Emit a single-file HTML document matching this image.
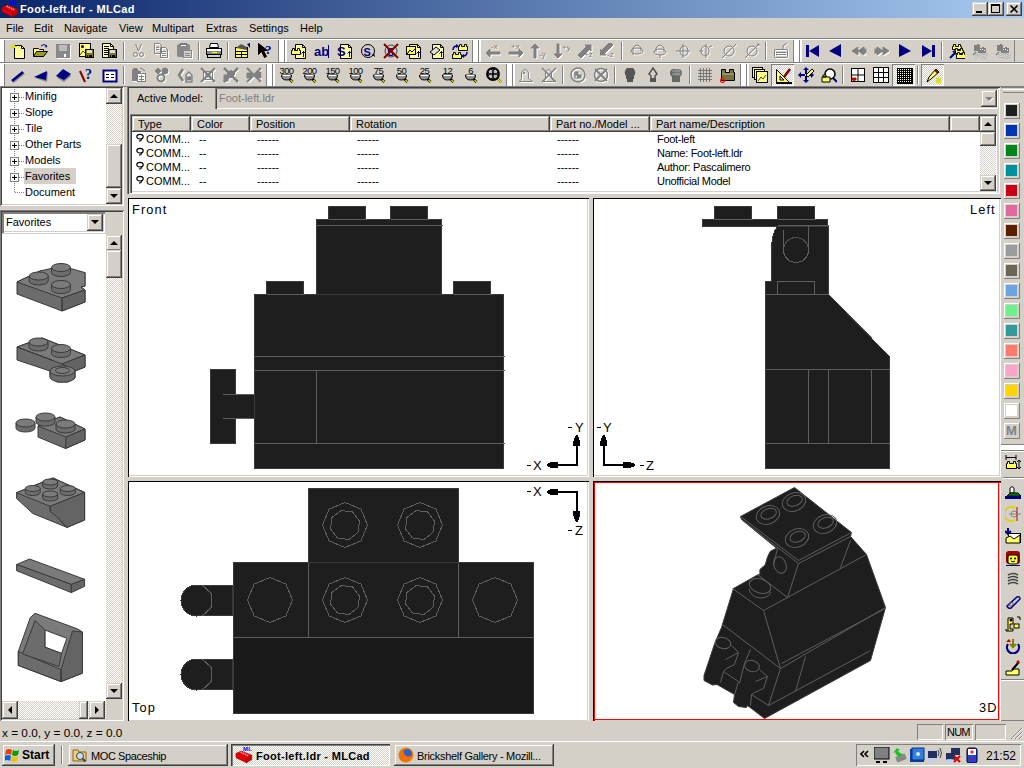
<!DOCTYPE html>
<html><head><meta charset="utf-8"><style>
html,body{margin:0;padding:0;width:1024px;height:768px;overflow:hidden;background:#D4D0C8;font-family:'Liberation Sans', sans-serif}
</style></head><body>
<div style="position:absolute;left:0px;top:0px;width:1024px;height:18px;background:linear-gradient(90deg,#0A246A,#A6CAF0)"></div><div style="position:absolute;left:20px;top:2px;white-space:nowrap;font:bold 11px 'Liberation Sans', sans-serif;color:#fff;line-height:14px;letter-spacing:0.35px">Foot-left.ldr - MLCad</div><div style="position:absolute;left:972px;top:2px;width:16px;height:14px;background:#D4D0C8;box-shadow:inset -1px -1px #404040, inset 1px 1px #D4D0C8, inset -2px -2px #808080, inset 2px 2px #fff;"></div><div style="position:absolute;left:988px;top:2px;width:16px;height:14px;background:#D4D0C8;box-shadow:inset -1px -1px #404040, inset 1px 1px #D4D0C8, inset -2px -2px #808080, inset 2px 2px #fff;"></div><div style="position:absolute;left:1006px;top:2px;width:16px;height:14px;background:#D4D0C8;box-shadow:inset -1px -1px #404040, inset 1px 1px #D4D0C8, inset -2px -2px #808080, inset 2px 2px #fff;"></div><div style="position:absolute;left:976px;top:11px;width:6px;height:2px;background:#000"></div><div style="position:absolute;left:991px;top:4px;width:9px;height:9px;box-shadow:inset 0 2px #000, inset 1px 0 #000, inset -1px 0 #000, inset 0 -1px #000"></div><svg style="position:absolute;left:1006px;top:2px" width="16" height="14"><path d="M4.5 3.5 L11.5 10.5 M11.5 3.5 L4.5 10.5" stroke="#000" stroke-width="1.6"/></svg><div style="position:absolute;left:0px;top:18px;width:1024px;height:20px;background:#D4D0C8"></div><div style="position:absolute;left:6px;top:22px;white-space:nowrap;font:11px 'Liberation Sans', sans-serif;color:#000;line-height:13px">File</div><div style="position:absolute;left:34px;top:22px;white-space:nowrap;font:11px 'Liberation Sans', sans-serif;color:#000;line-height:13px">Edit</div><div style="position:absolute;left:64px;top:22px;white-space:nowrap;font:11px 'Liberation Sans', sans-serif;color:#000;line-height:13px">Navigate</div><div style="position:absolute;left:119px;top:22px;white-space:nowrap;font:11px 'Liberation Sans', sans-serif;color:#000;line-height:13px">View</div><div style="position:absolute;left:152px;top:22px;white-space:nowrap;font:11px 'Liberation Sans', sans-serif;color:#000;line-height:13px">Multipart</div><div style="position:absolute;left:206px;top:22px;white-space:nowrap;font:11px 'Liberation Sans', sans-serif;color:#000;line-height:13px">Extras</div><div style="position:absolute;left:249px;top:22px;white-space:nowrap;font:11px 'Liberation Sans', sans-serif;color:#000;line-height:13px">Settings</div><div style="position:absolute;left:300px;top:22px;white-space:nowrap;font:11px 'Liberation Sans', sans-serif;color:#000;line-height:13px">Help</div><div style="position:absolute;left:0px;top:38px;width:1024px;height:1px;background:#808080"></div><div style="position:absolute;left:0px;top:39px;width:1024px;height:1px;background:#fff"></div><div style="position:absolute;left:0px;top:40px;width:1024px;height:22px;background:#D4D0C8"></div><div style="position:absolute;left:0px;top:62px;width:1024px;height:1px;background:#808080"></div><div style="position:absolute;left:0px;top:63px;width:1024px;height:1px;background:#fff"></div><div style="position:absolute;left:0px;top:64px;width:1024px;height:22px;background:#D4D0C8"></div><div style="position:absolute;left:0px;top:86px;width:1024px;height:1px;background:#808080"></div><div style="position:absolute;left:0px;top:40px;width:4px;height:22px;background:#fff"></div><div style="position:absolute;left:4px;top:40px;width:1px;height:22px;background:#808080"></div><div style="position:absolute;left:0px;top:64px;width:4px;height:22px;background:#fff"></div><div style="position:absolute;left:4px;top:64px;width:1px;height:22px;background:#808080"></div><svg style="position:absolute;left:10px;top:43px" width="16" height="16"><path d="M4.5,2.5 h7 l3,3 v10 h-10 z" fill="#FFFFA0" stroke="#000"/><path d="M11.5,2.5 v3 h3" fill="none" stroke="#000"/><path d="M1,1 l5,5 M6,1 l-5,5 M3.5,0 v7 M0,3.5 h7" stroke="#E0E000"/></svg><svg style="position:absolute;left:33px;top:43px" width="16" height="16"><path d="M0.5,5.5 h5 l1,1 h4 v7 h-10 z" fill="#FFFF60" stroke="#000"/><path d="M3.5,8.5 h11 l-4,5 h-10 z" fill="#9a9a30" stroke="#000"/><path d="M8,3 q3,-3 6,0" stroke="#000080" fill="none"/><path d="M13,2 l1.5,2 l-2.5,0.5z" fill="#000080"/></svg><svg style="position:absolute;left:56px;top:43px" width="16" height="16"><rect x="0" y="1" width="14" height="14" fill="#888"/><rect x="1" y="15" width="14" height="1" fill="#fff"/><rect x="14" y="2" width="1" height="14" fill="#fff"/><rect x="3" y="2" width="8" height="6" fill="#bbb"/><rect x="8" y="11" width="2" height="3" fill="#fff"/></svg><svg style="position:absolute;left:79px;top:43px" width="16" height="16"><rect x="0.5" y="0.5" width="11" height="13" fill="#FFFF80" stroke="#000"/><circle cx="3.5" cy="3.5" r="1.5" fill="#000"/><path d="M1,12 l3,-4 l3,3" stroke="#444" fill="none"/><rect x="6" y="6" width="9" height="9" fill="#000"/><rect x="7" y="7" width="7" height="7" fill="#808000"/><rect x="8" y="7" width="5" height="3" fill="#ddd"/><rect x="8" y="12" width="5" height="2" fill="#000"/><rect x="9" y="12" width="1" height="2" fill="#808000"/></svg><svg style="position:absolute;left:102px;top:43px" width="16" height="16"><path d="M0.5,0.5 h8 l3,3 v11 h-11 z" fill="#FFFFA0" stroke="#000"/><path d="M8.5,0.5 v3 h3" fill="none" stroke="#000"/><path d="M2,3.5 h5 M2,5.5 h5 M2,7.5 h4 M2,9.5 h4 M2,11.5 h4" stroke="#000"/><rect x="6" y="6" width="9" height="9" fill="#000"/><rect x="7" y="7" width="7" height="7" fill="#808000"/><rect x="8" y="7" width="5" height="3" fill="#ddd"/><rect x="8" y="12" width="5" height="2" fill="#000"/><rect x="9" y="12" width="1" height="2" fill="#808000"/></svg><div style="position:absolute;left:123px;top:42px;width:1px;height:18px;background:#808080"></div><div style="position:absolute;left:124px;top:42px;width:1px;height:18px;background:#fff"></div><svg style="position:absolute;left:131px;top:43px" width="16" height="16"><g transform="translate(1,1)" fill="#fff" stroke="#fff"><path d="M4.5,1 l3,7 M10.5,1 l-3,7" fill="none"/><circle cx="4.5" cy="11.5" r="2" fill="none"/><circle cx="10.5" cy="11.5" r="2" fill="none"/></g><g fill="#808080" stroke="#808080"><path d="M4.5,1 l3,7 M10.5,1 l-3,7" fill="none"/><circle cx="4.5" cy="11.5" r="2" fill="none"/><circle cx="10.5" cy="11.5" r="2" fill="none"/></g></svg><svg style="position:absolute;left:154px;top:43px" width="16" height="16"><g transform="translate(1,1)" fill="#fff" stroke="#fff"><path d="M0.5,0.5 h5 l2,2 v8 h-7 z M6.5,4.5 h5 l2,2 v8 h-7 z" fill="none"/><path d="M2,4.5 h3 M2,6.5 h3 M8,8.5 h4 M8,10.5 h4 M8,12.5 h4" fill="none"/></g><g fill="#808080" stroke="#808080"><path d="M0.5,0.5 h5 l2,2 v8 h-7 z M6.5,4.5 h5 l2,2 v8 h-7 z" fill="none"/><path d="M2,4.5 h3 M2,6.5 h3 M8,8.5 h4 M8,10.5 h4 M8,12.5 h4" fill="none"/></g></svg><svg style="position:absolute;left:177px;top:43px" width="16" height="16"><g transform="translate(1,1)"><rect x="6" y="7" width="9" height="8" fill="#fff"/></g><rect x="0" y="1" width="13" height="13" rx="2" fill="#888"/><rect x="3" y="0" width="7" height="3" fill="#777"/><rect x="4" y="2" width="5" height="1" fill="#fff"/><rect x="6.5" y="7.5" width="8" height="7" fill="#D4D0C8" stroke="#888"/><path d="M8,10.5 h5 M8,12.5 h5" stroke="#888"/></svg><div style="position:absolute;left:198px;top:42px;width:1px;height:18px;background:#808080"></div><div style="position:absolute;left:199px;top:42px;width:1px;height:18px;background:#fff"></div><svg style="position:absolute;left:206px;top:43px" width="16" height="16"><path d="M4.5,0.5 h7 l1,4 h-9 z" fill="#fff" stroke="#000"/><rect x="0.5" y="5.5" width="15" height="6" fill="#fff" stroke="#000"/><rect x="1" y="8" width="14" height="3" fill="#888"/><rect x="6" y="9" width="5" height="1" fill="#FFFF00"/><rect x="1.5" y="11.5" width="13" height="3" fill="#D4D0C8" stroke="#000"/></svg><div style="position:absolute;left:227px;top:42px;width:1px;height:18px;background:#808080"></div><div style="position:absolute;left:228px;top:42px;width:1px;height:18px;background:#fff"></div><svg style="position:absolute;left:235px;top:43px" width="16" height="16"><rect x="0.5" y="4.5" width="12" height="10" fill="#FFFF60" stroke="#000"/><path d="M1,8.5 h11 M1,11.5 h11 M6.5,8 v6" stroke="#000"/><path d="M1,5 l5,-4 l6,3 v3 z" fill="#555"/><path d="M12,1 l3,-1 v5 z" fill="#000080"/></svg><svg style="position:absolute;left:258px;top:43px" width="16" height="16"><path d="M0.5,0.5 v11 l3,-3 l3,6 l2,-1 l-3,-6 h4 z" fill="#000" stroke="#000"/><text x="7" y="11" font-family="Liberation Serif" font-weight="bold" font-size="13" fill="#000080">?</text></svg><div style="position:absolute;left:278px;top:40px;width:1px;height:22px;background:#808080"></div><div style="position:absolute;left:279px;top:40px;width:5px;height:22px;background:#fff"></div><div style="position:absolute;left:284px;top:40px;width:1px;height:22px;background:#808080"></div><div style="position:absolute;left:285px;top:40px;width:2px;height:22px;background:#fff"></div><svg style="position:absolute;left:291px;top:43px" width="16" height="16"><path d="M4.5,1.5 h7 l3,3 v11 h-10 z" fill="#FFFFA0" stroke="#000"/><path d="M11.5,1.5 v3 h3" fill="none" stroke="#000"/><path d="M0.5,7.5 h1 v-2 h2 v2 h3 v-2 h2 v2 h1 v4 h-9 z" fill="#FFFF60" stroke="#000"/><path d="M12.5,8 v6 M10.5,10.5 l2,-2 l2,2" stroke="#000080" fill="none"/></svg><svg style="position:absolute;left:314px;top:43px" width="16" height="16"><text x="0" y="13" font-family="Liberation Sans" font-weight="bold" font-size="13" fill="#000080">ab</text><rect x="14" y="2" width="1" height="13" fill="#000080"/></svg><svg style="position:absolute;left:337px;top:43px" width="16" height="16"><path d="M3.5,1.5 h8 l3,3 v11 h-11 z" fill="#FFFFA0" stroke="#000"/><path d="M11.5,1.5 v3 h3" fill="none" stroke="#000"/><text x="0" y="13" font-family="Liberation Sans" font-weight="bold" font-size="13" fill="#000080">S</text><path d="M12.5,8 v6 M10.5,10.5 l2,-2 l2,2" stroke="#000080" fill="none"/></svg><svg style="position:absolute;left:360px;top:43px" width="16" height="16"><circle cx="8" cy="8" r="6.5" fill="none" stroke="#000"/><path d="M12,12 l3,2 l-1,-4z" fill="#000"/><text x="3.5" y="12.5" font-family="Liberation Sans" font-weight="bold" font-size="11" fill="#000080">S</text></svg><svg style="position:absolute;left:383px;top:43px" width="16" height="16"><circle cx="8" cy="8" r="6" fill="none" stroke="#444"/><text x="4" y="12.5" font-family="Liberation Sans" font-weight="bold" font-size="11" fill="#000080">S</text><path d="M1,1 l14,14 M15,1 l-14,14" stroke="#800000" stroke-width="2"/></svg><svg style="position:absolute;left:406px;top:43px" width="16" height="16"><path d="M3.5,1.5 h8 l3,3 v11 h-11 z" fill="#FFFFA0" stroke="#000"/><path d="M11.5,1.5 v3 h3" fill="none" stroke="#000"/><rect x="0.5" y="3.5" width="9" height="8" fill="#FFFF60" stroke="#000"/><path d="M1,11 l3,-4 l2,2 l3,-3" stroke="#000" fill="none"/><path d="M12.5,8 v6 M10.5,10.5 l2,-2 l2,2" stroke="#000080" fill="none"/></svg><svg style="position:absolute;left:429px;top:43px" width="16" height="16"><path d="M3.5,1.5 h8 l3,3 v11 h-11 z" fill="#FFFFA0" stroke="#000"/><path d="M11.5,1.5 v3 h3" fill="none" stroke="#000"/><path d="M1,9 l6,-5 l4,3 l-6,5 z" fill="#ddd" stroke="#000"/><path d="M12.5,8 v6 M10.5,10.5 l2,-2 l2,2" stroke="#000080" fill="none"/></svg><svg style="position:absolute;left:452px;top:43px" width="16" height="16"><path d="M6.5,3.5 h1 v-2 h2 v2 h3 v-2 h2 v2 h1 v4 h-9 z" fill="#FFFF60" stroke="#000"/><path d="M0.5,11.5 h1 v-2 h2 v2 h3 v-2 h2 v2 h1 v4 h-9 z" fill="#FFFF60" stroke="#000"/><path d="M1,7 q0,-4 4,-4" stroke="#000080" fill="none" stroke-width="1.5"/><path d="M4,1 l3,2 l-3,2z" fill="#000080"/><path d="M15,9 q0,4 -4,4" stroke="#000080" fill="none" stroke-width="1.5"/><path d="M12,11 l-3,2 l3,2z" fill="#000080"/></svg><div style="position:absolute;left:472px;top:40px;width:1px;height:22px;background:#808080"></div><div style="position:absolute;left:473px;top:40px;width:5px;height:22px;background:#fff"></div><div style="position:absolute;left:478px;top:40px;width:1px;height:22px;background:#808080"></div><div style="position:absolute;left:479px;top:40px;width:2px;height:22px;background:#fff"></div><svg style="position:absolute;left:485px;top:43px" width="16" height="16"><g transform="translate(1,1)" fill="#fff" stroke="#fff"><path d="M1,10 l4,-4 v3 h10 v2 h-10 v3 z"/><text x="6" y="6" font-family="Liberation Sans" font-size="8" stroke="none">-x</text></g><g fill="#808080" stroke="#808080"><path d="M1,10 l4,-4 v3 h10 v2 h-10 v3 z"/><text x="6" y="6" font-family="Liberation Sans" font-size="8" stroke="none">-x</text></g></svg><svg style="position:absolute;left:508px;top:43px" width="16" height="16"><g transform="translate(1,1)" fill="#fff" stroke="#fff"><path d="M15,10 l-4,-4 v3 h-10 v2 h10 v3 z"/><text x="3" y="6" font-family="Liberation Sans" font-size="8" stroke="none">+x</text></g><g fill="#808080" stroke="#808080"><path d="M15,10 l-4,-4 v3 h-10 v2 h10 v3 z"/><text x="3" y="6" font-family="Liberation Sans" font-size="8" stroke="none">+x</text></g></svg><svg style="position:absolute;left:531px;top:43px" width="16" height="16"><g transform="translate(1,1)" fill="#fff" stroke="#fff"><path d="M4,1 l-4,4 h3 v10 h2 v-10 h3 z"/><text x="8" y="14" font-family="Liberation Sans" font-size="8" stroke="none">-y</text></g><g fill="#808080" stroke="#808080"><path d="M4,1 l-4,4 h3 v10 h2 v-10 h3 z"/><text x="8" y="14" font-family="Liberation Sans" font-size="8" stroke="none">-y</text></g></svg><svg style="position:absolute;left:554px;top:43px" width="16" height="16"><g transform="translate(1,1)" fill="#fff" stroke="#fff"><path d="M4,15 l-4,-4 h3 v-10 h2 v10 h3 z"/><text x="8" y="7" font-family="Liberation Sans" font-size="8" stroke="none">+y</text></g><g fill="#808080" stroke="#808080"><path d="M4,15 l-4,-4 h3 v-10 h2 v10 h3 z"/><text x="8" y="7" font-family="Liberation Sans" font-size="8" stroke="none">+y</text></g></svg><svg style="position:absolute;left:577px;top:43px" width="16" height="16"><g transform="translate(1,1)" fill="#fff" stroke="#fff"><path d="M1,12 l9,-9 l-2,-1 h6 v6 l-1,-2 l-9,9 z"/><text x="7" y="14" font-family="Liberation Sans" font-size="8" stroke="none">+z</text></g><g fill="#808080" stroke="#808080"><path d="M1,12 l9,-9 l-2,-1 h6 v6 l-1,-2 l-9,9 z"/><text x="7" y="14" font-family="Liberation Sans" font-size="8" stroke="none">+z</text></g></svg><svg style="position:absolute;left:600px;top:43px" width="16" height="16"><g transform="translate(1,1)" fill="#fff" stroke="#fff"><path d="M13,2 l-9,9 l2,1 h-6 v-6 l1,2 l9,-9 z"/><text x="7" y="14" font-family="Liberation Sans" font-size="8" stroke="none">-z</text></g><g fill="#808080" stroke="#808080"><path d="M13,2 l-9,9 l2,1 h-6 v-6 l1,2 l9,-9 z"/><text x="7" y="14" font-family="Liberation Sans" font-size="8" stroke="none">-z</text></g></svg><div style="position:absolute;left:621px;top:42px;width:1px;height:18px;background:#808080"></div><div style="position:absolute;left:622px;top:42px;width:1px;height:18px;background:#fff"></div><svg style="position:absolute;left:629px;top:43px" width="16" height="16"><g transform="translate(1,1)" fill="#fff" stroke="#fff"><ellipse cx="8" cy="8" rx="6" ry="3" fill="none"/><path d="M4,12 v-7 q4,-6 8,0 v3" fill="none"/></g><g fill="#808080" stroke="#808080"><ellipse cx="8" cy="8" rx="6" ry="3" fill="none"/><path d="M4,12 v-7 q4,-6 8,0 v3" fill="none"/></g></svg><svg style="position:absolute;left:652px;top:43px" width="16" height="16"><g transform="translate(1,1)" fill="#fff" stroke="#fff"><ellipse cx="8" cy="9" rx="6" ry="3" fill="none"/><path d="M4,9 v-4 q4,-6 8,0 v4" fill="none"/><path d="M8,12 v3" fill="none"/></g><g fill="#808080" stroke="#808080"><ellipse cx="8" cy="9" rx="6" ry="3" fill="none"/><path d="M4,9 v-4 q4,-6 8,0 v4" fill="none"/><path d="M8,12 v3" fill="none"/></g></svg><svg style="position:absolute;left:675px;top:43px" width="16" height="16"><g transform="translate(1,1)" fill="#fff" stroke="#fff"><ellipse cx="9" cy="8" rx="4" ry="5" fill="none"/><path d="M1,8 h14 M8,1 v14" fill="none"/></g><g fill="#808080" stroke="#808080"><ellipse cx="9" cy="8" rx="4" ry="5" fill="none"/><path d="M1,8 h14 M8,1 v14" fill="none"/></g></svg><svg style="position:absolute;left:698px;top:43px" width="16" height="16"><g transform="translate(1,1)" fill="#fff" stroke="#fff"><ellipse cx="7" cy="8" rx="4" ry="5" fill="none"/><path d="M1,8 h4 M8,1 v14 M11,4 l3,-1" fill="none"/></g><g fill="#808080" stroke="#808080"><ellipse cx="7" cy="8" rx="4" ry="5" fill="none"/><path d="M1,8 h4 M8,1 v14 M11,4 l3,-1" fill="none"/></g></svg><svg style="position:absolute;left:721px;top:43px" width="16" height="16"><g transform="translate(1,1)" fill="#fff" stroke="#fff"><circle cx="8" cy="8" r="5" fill="none"/><path d="M1,15 l14,-14" fill="none"/></g><g fill="#808080" stroke="#808080"><circle cx="8" cy="8" r="5" fill="none"/><path d="M1,15 l14,-14" fill="none"/></g></svg><svg style="position:absolute;left:744px;top:43px" width="16" height="16"><g transform="translate(1,1)" fill="#fff" stroke="#fff"><circle cx="8" cy="8" r="5" fill="none"/><path d="M1,15 l14,-14 M13,1 h2 v2" fill="none"/></g><g fill="#808080" stroke="#808080"><circle cx="8" cy="8" r="5" fill="none"/><path d="M1,15 l14,-14 M13,1 h2 v2" fill="none"/></g></svg><div style="position:absolute;left:765px;top:42px;width:1px;height:18px;background:#808080"></div><div style="position:absolute;left:766px;top:42px;width:1px;height:18px;background:#fff"></div><svg style="position:absolute;left:773px;top:43px" width="16" height="16"><g transform="translate(1,1)" fill="#fff" stroke="#fff"><rect x="1.5" y="6.5" width="13" height="8" rx="1" fill="none"/><path d="M3,9.5 h10 M3,11.5 h10 M10,6 v-3 l4,-3" fill="none"/></g><g fill="#808080" stroke="#808080"><rect x="1.5" y="6.5" width="13" height="8" rx="1" fill="none"/><path d="M3,9.5 h10 M3,11.5 h10 M10,6 v-3 l4,-3" fill="none"/></g></svg><div style="position:absolute;left:793px;top:40px;width:1px;height:22px;background:#808080"></div><div style="position:absolute;left:794px;top:40px;width:5px;height:22px;background:#fff"></div><div style="position:absolute;left:799px;top:40px;width:1px;height:22px;background:#808080"></div><div style="position:absolute;left:800px;top:40px;width:2px;height:22px;background:#fff"></div><svg style="position:absolute;left:805px;top:43px" width="16" height="16"><rect x="1" y="2" width="3" height="12" fill="#000080"/><path d="M4,8 l10,-6 v12 z" fill="#000080"/></svg><svg style="position:absolute;left:828px;top:43px" width="16" height="16"><path d="M1,8 l12,-7 v13 z" fill="#000080"/></svg><svg style="position:absolute;left:851px;top:43px" width="16" height="16"><g transform="translate(1,1)" fill="#fff" stroke="#fff"><path d="M1,8 l6,-4 v8 z M7,8 l6,-4 v8 z"/><rect x="13" y="6" width="2" height="4"/></g><g fill="#808080" stroke="#808080"><path d="M1,8 l6,-4 v8 z M7,8 l6,-4 v8 z"/><rect x="13" y="6" width="2" height="4"/></g></svg><svg style="position:absolute;left:874px;top:43px" width="16" height="16"><g transform="translate(1,1)" fill="#fff" stroke="#fff"><path d="M15,8 l-6,-4 v8 z M9,8 l-6,-4 v8 z"/><rect x="1" y="6" width="2" height="4"/></g><g fill="#808080" stroke="#808080"><path d="M15,8 l-6,-4 v8 z M9,8 l-6,-4 v8 z"/><rect x="1" y="6" width="2" height="4"/></g></svg><svg style="position:absolute;left:897px;top:43px" width="16" height="16"><path d="M14,8 l-12,-7 v13 z" fill="#000080"/></svg><svg style="position:absolute;left:920px;top:43px" width="16" height="16"><rect x="12" y="2" width="3" height="12" fill="#000080"/><path d="M12,8 l-10,-6 v12 z" fill="#000080"/></svg><div style="position:absolute;left:941px;top:42px;width:1px;height:18px;background:#808080"></div><div style="position:absolute;left:942px;top:42px;width:1px;height:18px;background:#fff"></div><svg style="position:absolute;left:949px;top:43px" width="16" height="16"><path d="M3.5,3.5 h1 v-2 h2 v2 h3 v-2 h2 v2 h1 v3 h-9 z" fill="#FFFF60" stroke="#000"/><path d="M5.5,7.5 h1 v-2 h2 v2 h3 v-2 h2 v2 h1 v3 h-9 z" fill="#FFFF60" stroke="#000"/><path d="M7.5,11.5 h1 v-2 h2 v2 h3 v-2 h2 v2 h1 v4 h-9 z" fill="#FFFF60" stroke="#000"/><path d="M1,15 l5,-5" stroke="#000080" stroke-width="2"/><path d="M7,8 v4 l-4,-4 z" fill="#000080"/></svg><svg style="position:absolute;left:972px;top:43px" width="16" height="16"><path d="M2,2 h3 v-1 h2 v1 h1 v3 h2 v-1 h2 v1 h2 v5 h-8 v-2 h-4 z" fill="#808080"/><path d="M1,12 l3,-3" stroke="#808080" stroke-width="1.5"/><rect x="8" y="6" width="1" height="1" fill="#fff"/><rect x="10" y="6" width="1" height="1" fill="#fff"/><rect x="12" y="7" width="1" height="1" fill="#fff"/><text x="3" y="16" font-family="Liberation Sans" font-weight="bold" font-size="7" fill="#fff" stroke="#909090" stroke-width="0.4">PEP</text></svg><svg style="position:absolute;left:995px;top:43px" width="16" height="16"><path d="M2,2 h3 v-1 h2 v1 h1 v3 h2 v-1 h2 v1 h2 v5 h-8 v-2 h-4 z" fill="#808080"/><path d="M1,12 l3,-3" stroke="#808080" stroke-width="1.5"/><rect x="8" y="6" width="1" height="1" fill="#fff"/><rect x="10" y="6" width="1" height="1" fill="#fff"/><rect x="12" y="7" width="1" height="1" fill="#fff"/><text x="3" y="16" font-family="Liberation Sans" font-weight="bold" font-size="7" fill="#fff" stroke="#909090" stroke-width="0.4">CEC</text></svg><div style="position:absolute;left:1014px;top:40px;width:1px;height:22px;background:#808080"></div><svg style="position:absolute;left:10px;top:67px" width="16" height="16"><path d="M3,15 l11,-9" stroke="#888" stroke-width="2.5"/><path d="M2,14 l11,-9" stroke="#000080" stroke-width="2.5"/></svg><svg style="position:absolute;left:33px;top:67px" width="16" height="16"><path d="M2,11 l13,-6 l-1,10 z" fill="#888"/><path d="M1,10 l13,-6 l-1,9 z" fill="#000080"/></svg><svg style="position:absolute;left:56px;top:67px" width="16" height="16"><path d="M1,10 l7,-7 l7,5 l-7,6 z" fill="#888" transform="translate(0,1)"/><path d="M0,9 l7,-7 l8,5 l-7,6 z" fill="#000080"/></svg><svg style="position:absolute;left:79px;top:67px" width="16" height="16"><path d="M1,4 l5,11" stroke="#800000" stroke-width="2"/><text x="6" y="12" font-family="Liberation Serif" font-weight="bold" font-size="14" fill="#000080">?</text></svg><svg style="position:absolute;left:102px;top:67px" width="16" height="16"><rect x="1.5" y="3.5" width="13" height="11" fill="#fff" stroke="#000080" stroke-width="2"/><path d="M4,7.5 h3 M9,7.5 h3 M4,10.5 h3 M9,10.5 h3" stroke="#000"/></svg><div style="position:absolute;left:123px;top:66px;width:1px;height:18px;background:#808080"></div><div style="position:absolute;left:124px;top:66px;width:1px;height:18px;background:#fff"></div><svg style="position:absolute;left:131px;top:67px" width="16" height="16"><g transform="translate(1,1)" fill="#fff"><path d="M1,3 l2,-2 h3 l2,3 h2 v3 h-4 v7 h-5 z"/></g><path d="M1,3 l2,-2 h3 l2,3 h2 v3 h-4 v7 h-5 z" fill="#808080"/><rect x="6.5" y="6.5" width="8" height="8" fill="#fff" stroke="#808080"/><path d="M8,9.5 h5 M8,12.5 h5 M10.5,8 v6" stroke="#808080"/><path d="M9,1 q3,0 4,3 l1,-1" stroke="#808080" fill="none"/></svg><svg style="position:absolute;left:154px;top:67px" width="16" height="16"><g transform="translate(1,1)" fill="#fff" stroke="#fff"><path d="M1,4 l3,-3 l3,3 l-3,3 z"/><circle cx="11" cy="4" r="3"/><circle cx="7" cy="11" r="3.5" fill="none" stroke-width="2"/><path d="M8,6 l2,2"/></g><g fill="#808080" stroke="#808080"><path d="M1,4 l3,-3 l3,3 l-3,3 z"/><circle cx="11" cy="4" r="3"/><circle cx="7" cy="11" r="3.5" fill="none" stroke-width="2"/><path d="M8,6 l2,2"/></g></svg><svg style="position:absolute;left:177px;top:67px" width="16" height="16"><g transform="translate(1,1)" fill="#fff" stroke="#fff"><path d="M6,2 l-4,6 l4,6" fill="none" stroke-width="2.5"/><path d="M9,8 l3,-3 l3,3 v7 h-6 z" fill="none" stroke-width="1.5"/><rect x="10" y="10" width="4" height="3"/></g><g fill="#808080" stroke="#808080"><path d="M6,2 l-4,6 l4,6" fill="none" stroke-width="2.5"/><path d="M9,8 l3,-3 l3,3 v7 h-6 z" fill="none" stroke-width="1.5"/><rect x="10" y="10" width="4" height="3"/></g></svg><svg style="position:absolute;left:200px;top:67px" width="16" height="16"><g transform="translate(1,1)" fill="#fff" stroke="#fff"><path d="M1,1 l14,14 M15,1 l-14,14" stroke-width="2.2"/><rect x="3.5" y="4.5" width="9" height="8" fill="none"/><circle cx="8" cy="8" r="2"/></g><g fill="#808080" stroke="#808080"><path d="M1,1 l14,14 M15,1 l-14,14" stroke-width="2.2"/><rect x="3.5" y="4.5" width="9" height="8" fill="none"/><circle cx="8" cy="8" r="2"/></g></svg><svg style="position:absolute;left:223px;top:67px" width="16" height="16"><g transform="translate(1,1)" fill="#fff" stroke="#fff"><path d="M1,1 l14,14 M15,1 l-14,14" stroke-width="2.5"/><path d="M8,3 l4,4 l-4,4 l-4,-4 z"/><rect x="1" y="8" width="4" height="6"/></g><g fill="#808080" stroke="#808080"><path d="M1,1 l14,14 M15,1 l-14,14" stroke-width="2.5"/><path d="M8,3 l4,4 l-4,4 l-4,-4 z"/><rect x="1" y="8" width="4" height="6"/></g></svg><svg style="position:absolute;left:246px;top:67px" width="16" height="16"><g transform="translate(1,1)" fill="#fff" stroke="#fff"><path d="M1,1 l14,14 M15,1 l-14,14" stroke-width="2.2"/><path d="M1,6 h5 v5 h-5 z M10,5 h5 v6 h-5 z"/></g><g fill="#808080" stroke="#808080"><path d="M1,1 l14,14 M15,1 l-14,14" stroke-width="2.2"/><path d="M1,6 h5 v5 h-5 z M10,5 h5 v6 h-5 z"/></g></svg><div style="position:absolute;left:266px;top:64px;width:1px;height:22px;background:#808080"></div><div style="position:absolute;left:267px;top:64px;width:5px;height:22px;background:#fff"></div><div style="position:absolute;left:272px;top:64px;width:1px;height:22px;background:#808080"></div><div style="position:absolute;left:273px;top:64px;width:2px;height:22px;background:#fff"></div><svg style="position:absolute;left:279px;top:67px" width="16" height="16"><text x="7.5" y="6.8" text-anchor="middle" font-family="Liberation Sans" font-size="9.5" fill="#000" letter-spacing="-0.6">300</text><path d="M2.5,8 q0,5 5,5 q5,0 5,-5 z" fill="#909090" stroke="#000"/><path d="M3.5,8.5 h8" stroke="#fff"/><path d="M10.5,12 l3,3" stroke="#000" stroke-width="2.5"/><path d="M11.5,13 l2,2" stroke="#E0E000" stroke-width="1.5"/></svg><svg style="position:absolute;left:302px;top:67px" width="16" height="16"><text x="7.5" y="6.8" text-anchor="middle" font-family="Liberation Sans" font-size="9.5" fill="#000" letter-spacing="-0.6">200</text><path d="M2.5,8 q0,5 5,5 q5,0 5,-5 z" fill="#909090" stroke="#000"/><path d="M3.5,8.5 h8" stroke="#fff"/><path d="M10.5,12 l3,3" stroke="#000" stroke-width="2.5"/><path d="M11.5,13 l2,2" stroke="#E0E000" stroke-width="1.5"/></svg><svg style="position:absolute;left:325px;top:67px" width="16" height="16"><text x="7.5" y="6.8" text-anchor="middle" font-family="Liberation Sans" font-size="9.5" fill="#000" letter-spacing="-0.6">150</text><path d="M2.5,8 q0,5 5,5 q5,0 5,-5 z" fill="#909090" stroke="#000"/><path d="M3.5,8.5 h8" stroke="#fff"/><path d="M10.5,12 l3,3" stroke="#000" stroke-width="2.5"/><path d="M11.5,13 l2,2" stroke="#E0E000" stroke-width="1.5"/></svg><svg style="position:absolute;left:348px;top:67px" width="16" height="16"><text x="7.5" y="6.8" text-anchor="middle" font-family="Liberation Sans" font-size="9.5" fill="#000" letter-spacing="-0.6">100</text><path d="M2.5,8 q0,5 5,5 q5,0 5,-5 z" fill="#909090" stroke="#000"/><path d="M3.5,8.5 h8" stroke="#fff"/><path d="M10.5,12 l3,3" stroke="#000" stroke-width="2.5"/><path d="M11.5,13 l2,2" stroke="#E0E000" stroke-width="1.5"/></svg><svg style="position:absolute;left:371px;top:67px" width="16" height="16"><text x="7.5" y="6.8" text-anchor="middle" font-family="Liberation Sans" font-size="9.5" fill="#000" letter-spacing="-0.6">75</text><path d="M2.5,8 q0,5 5,5 q5,0 5,-5 z" fill="#909090" stroke="#000"/><path d="M3.5,8.5 h8" stroke="#fff"/><path d="M10.5,12 l3,3" stroke="#000" stroke-width="2.5"/><path d="M11.5,13 l2,2" stroke="#E0E000" stroke-width="1.5"/></svg><svg style="position:absolute;left:394px;top:67px" width="16" height="16"><text x="7.5" y="6.8" text-anchor="middle" font-family="Liberation Sans" font-size="9.5" fill="#000" letter-spacing="-0.6">50</text><path d="M2.5,8 q0,5 5,5 q5,0 5,-5 z" fill="#909090" stroke="#000"/><path d="M3.5,8.5 h8" stroke="#fff"/><path d="M10.5,12 l3,3" stroke="#000" stroke-width="2.5"/><path d="M11.5,13 l2,2" stroke="#E0E000" stroke-width="1.5"/></svg><svg style="position:absolute;left:417px;top:67px" width="16" height="16"><text x="7.5" y="6.8" text-anchor="middle" font-family="Liberation Sans" font-size="9.5" fill="#000" letter-spacing="-0.6">25</text><path d="M2.5,8 q0,5 5,5 q5,0 5,-5 z" fill="#909090" stroke="#000"/><path d="M3.5,8.5 h8" stroke="#fff"/><path d="M10.5,12 l3,3" stroke="#000" stroke-width="2.5"/><path d="M11.5,13 l2,2" stroke="#E0E000" stroke-width="1.5"/></svg><svg style="position:absolute;left:440px;top:67px" width="16" height="16"><text x="7.5" y="6.8" text-anchor="middle" font-family="Liberation Sans" font-size="9.5" fill="#000" letter-spacing="-0.6">12</text><path d="M2.5,8 q0,5 5,5 q5,0 5,-5 z" fill="#909090" stroke="#000"/><path d="M3.5,8.5 h8" stroke="#fff"/><path d="M10.5,12 l3,3" stroke="#000" stroke-width="2.5"/><path d="M11.5,13 l2,2" stroke="#E0E000" stroke-width="1.5"/></svg><svg style="position:absolute;left:463px;top:67px" width="16" height="16"><text x="7.5" y="6.8" text-anchor="middle" font-family="Liberation Sans" font-size="9.5" fill="#000" letter-spacing="-0.6">6</text><path d="M2.5,8 q0,5 5,5 q5,0 5,-5 z" fill="#909090" stroke="#000"/><path d="M3.5,8.5 h8" stroke="#fff"/><path d="M10.5,12 l3,3" stroke="#000" stroke-width="2.5"/><path d="M11.5,13 l2,2" stroke="#E0E000" stroke-width="1.5"/></svg><svg style="position:absolute;left:486px;top:67px" width="16" height="16"><circle cx="7" cy="7" r="6" fill="#bbb" stroke="#000" stroke-width="1.8"/><path d="M7,1.5 v11 M1.5,7 h11" stroke="#000" stroke-width="1.5"/><path d="M5,3 l2,-2 l2,2 M5,11 l2,2 l2,-2 M3,5 l-2,2 l2,2 M11,5 l2,2 l-2,2" stroke="#000" fill="none"/><path d="M11,11 l4,4" stroke="#000" stroke-width="2"/><path d="M12,12 l3,3" stroke="#FFFF00" stroke-width="1.5"/></svg><div style="position:absolute;left:506px;top:64px;width:1px;height:22px;background:#808080"></div><div style="position:absolute;left:507px;top:64px;width:5px;height:22px;background:#fff"></div><div style="position:absolute;left:512px;top:64px;width:1px;height:22px;background:#808080"></div><div style="position:absolute;left:513px;top:64px;width:2px;height:22px;background:#fff"></div><svg style="position:absolute;left:518px;top:67px" width="16" height="16"><g transform="translate(1,1)" fill="#fff" stroke="#fff"><path d="M1.5,14.5 l2,-3 v-6 q4,-6 7,0 v6 l4,3 z" fill="none"/><circle cx="6" cy="6" r="0.8"/></g><g fill="#808080" stroke="#808080"><path d="M1.5,14.5 l2,-3 v-6 q4,-6 7,0 v6 l4,3 z" fill="none"/><circle cx="6" cy="6" r="0.8"/></g></svg><svg style="position:absolute;left:541px;top:67px" width="16" height="16"><g transform="translate(1,1)" fill="#fff" stroke="#fff"><path d="M2.5,14.5 l2,-3 v-6 q3,-6 6,0 v6 l3,3 z" fill="none"/><path d="M1,1 l14,14 M15,1 l-14,14" stroke-width="1.5"/></g><g fill="#808080" stroke="#808080"><path d="M2.5,14.5 l2,-3 v-6 q3,-6 6,0 v6 l3,3 z" fill="none"/><path d="M1,1 l14,14 M15,1 l-14,14" stroke-width="1.5"/></g></svg><div style="position:absolute;left:562px;top:66px;width:1px;height:18px;background:#808080"></div><div style="position:absolute;left:563px;top:66px;width:1px;height:18px;background:#fff"></div><svg style="position:absolute;left:570px;top:67px" width="16" height="16"><g transform="translate(1,1)" fill="#fff" stroke="#fff"><circle cx="8" cy="8" r="7" fill="none" stroke-width="1.5"/><rect x="5" y="5" width="3" height="3"/><rect x="8" y="8" width="3" height="3"/><rect x="5" y="8" width="3" height="3" fill="none"/></g><g fill="#808080" stroke="#808080"><circle cx="8" cy="8" r="7" fill="none" stroke-width="1.5"/><rect x="5" y="5" width="3" height="3"/><rect x="8" y="8" width="3" height="3"/><rect x="5" y="8" width="3" height="3" fill="none"/></g></svg><svg style="position:absolute;left:593px;top:67px" width="16" height="16"><g transform="translate(1,1)" fill="#fff" stroke="#fff"><circle cx="8" cy="8" r="6.5" fill="none" stroke-width="1.5"/><path d="M2,2 l12,12 M14,2 l-12,12" stroke-width="2"/></g><g fill="#808080" stroke="#808080"><circle cx="8" cy="8" r="6.5" fill="none" stroke-width="1.5"/><path d="M2,2 l12,12 M14,2 l-12,12" stroke-width="2"/></g></svg><div style="position:absolute;left:614px;top:66px;width:1px;height:18px;background:#808080"></div><div style="position:absolute;left:615px;top:66px;width:1px;height:18px;background:#fff"></div><svg style="position:absolute;left:622px;top:67px" width="16" height="16"><path d="M4,9 q-3,-4 1,-8 h6 q4,4 1,8 v3 h-8 z" fill="#555"/><rect x="5" y="12" width="6" height="3" fill="#555"/></svg><svg style="position:absolute;left:645px;top:67px" width="16" height="16"><path d="M4,7 l4,-6 l4,6 l-2,2 v3 h-4 v-3 z" fill="none" stroke="#555" stroke-width="1.5"/><rect x="5" y="11" width="6" height="4" fill="#555"/></svg><svg style="position:absolute;left:668px;top:67px" width="16" height="16"><circle cx="6" cy="6" r="4" fill="#666"/><circle cx="10" cy="6" r="4" fill="#777"/><rect x="4" y="9" width="8" height="6" fill="#666"/><path d="M4,4 h8 M4,7 h8" stroke="#aaa"/></svg><div style="position:absolute;left:689px;top:66px;width:1px;height:18px;background:#808080"></div><div style="position:absolute;left:690px;top:66px;width:1px;height:18px;background:#fff"></div><svg style="position:absolute;left:697px;top:67px" width="16" height="16"><path d="M3.5,1 v14 M6.5,1 v14 M9.5,1 v14 M12.5,1 v14 M1,3.5 h14 M1,6.5 h14 M1,9.5 h14 M1,12.5 h14" stroke="#777"/></svg><svg style="position:absolute;left:720px;top:67px" width="16" height="16"><path d="M1.5,5.5 v-3 h4 v3 h4 v-3 h4 v3 h1 v8 h-13 z" fill="#777040" stroke="#000"/><rect x="2" y="6" width="12" height="2" fill="#9a9060"/><circle cx="2.5" cy="13.5" r="2" fill="none" stroke="#f00" stroke-width="1.2"/></svg><div style="position:absolute;left:740px;top:64px;width:1px;height:22px;background:#808080"></div><div style="position:absolute;left:741px;top:64px;width:5px;height:22px;background:#fff"></div><div style="position:absolute;left:746px;top:64px;width:1px;height:22px;background:#808080"></div><div style="position:absolute;left:747px;top:64px;width:2px;height:22px;background:#fff"></div><svg style="position:absolute;left:752px;top:67px" width="16" height="16"><rect x="0.5" y="0.5" width="10" height="10" fill="#FFFF60" stroke="#000"/><rect x="2.5" y="2.5" width="10" height="10" fill="#FFFF60" stroke="#000"/><rect x="4.5" y="4.5" width="11" height="11" fill="#FFFF80" stroke="#000"/><path d="M6,14 l3,-4 l2,2 l3,-4" stroke="#444" fill="none"/></svg><div style="position:absolute;left:771px;top:64px;width:23px;height:22px;box-shadow:inset 1px 1px #808080, inset -1px -1px #fff;background:repeating-conic-gradient(#fff 0 25%, #D4D0C8 0 50%) 0 0/2px 2px"></div><svg style="position:absolute;left:776px;top:68px" width="16" height="16"><path d="M0.5,15.5 v-14 l14,14 z" fill="#FFFF60" stroke="#000"/><path d="M4,12 v-4 l4,4 z" fill="#D4D0C8" stroke="#000"/><path d="M0,15 h16" stroke="#000" stroke-width="2"/><path d="M8,9 l6,-8" stroke="#800000" stroke-width="2.5"/></svg><svg style="position:absolute;left:798px;top:67px" width="16" height="16"><path d="M8,0 l-3,3 h2 v10 h-2 l3,3 l3,-3 h-2 v-10 h2 z M0,8 l3,-3 v2 h10 v-2 l3,3 l-3,3 v-2 h-10 v2 z" fill="#000080"/><path d="M8,8 l6,-6 l2,2 l-6,6 z" fill="#FFFF60" stroke="#000"/></svg><svg style="position:absolute;left:821px;top:67px" width="16" height="16"><circle cx="9" cy="7" r="5" fill="#fff" stroke="#000" stroke-width="1.5"/><path d="M1,10 h8 v5 h-8 z M2,8 h3 v2 h-3z" fill="#FFFF60" stroke="#000"/><path d="M12,11 l4,4" stroke="#000080" stroke-width="2"/></svg><div style="position:absolute;left:842px;top:66px;width:1px;height:18px;background:#808080"></div><div style="position:absolute;left:843px;top:66px;width:1px;height:18px;background:#fff"></div><svg style="position:absolute;left:850px;top:67px" width="16" height="16"><rect x="1.5" y="1.5" width="13" height="13" fill="#fff" stroke="#000"/><path d="M8,1 v14 M1,8 h14" stroke="#000"/><path d="M1,12 q3,4 6,0 l-2,-2 q-1,2 -2,0 z" fill="#C00000"/></svg><svg style="position:absolute;left:873px;top:67px" width="16" height="16"><rect x="0.5" y="0.5" width="15" height="15" fill="#fff" stroke="#000"/><path d="M5.5,0 v16 M10.5,0 v16 M0,5.5 h16 M0,10.5 h16" stroke="#000"/></svg><div style="position:absolute;left:892px;top:64px;width:23px;height:22px;box-shadow:inset 1px 1px #808080, inset -1px -1px #fff;background:repeating-conic-gradient(#fff 0 25%, #D4D0C8 0 50%) 0 0/2px 2px"></div><svg style="position:absolute;left:897px;top:68px" width="16" height="16"><rect x="0" y="0" width="16" height="16" fill="#000"/><rect x="1" y="1" width="1" height="1" fill="#fff"/><rect x="1" y="3" width="1" height="1" fill="#fff"/><rect x="1" y="5" width="1" height="1" fill="#fff"/><rect x="1" y="7" width="1" height="1" fill="#fff"/><rect x="1" y="9" width="1" height="1" fill="#fff"/><rect x="1" y="11" width="1" height="1" fill="#fff"/><rect x="1" y="13" width="1" height="1" fill="#fff"/><rect x="3" y="1" width="1" height="1" fill="#fff"/><rect x="3" y="3" width="1" height="1" fill="#fff"/><rect x="3" y="5" width="1" height="1" fill="#fff"/><rect x="3" y="7" width="1" height="1" fill="#fff"/><rect x="3" y="9" width="1" height="1" fill="#fff"/><rect x="3" y="11" width="1" height="1" fill="#fff"/><rect x="3" y="13" width="1" height="1" fill="#fff"/><rect x="5" y="1" width="1" height="1" fill="#fff"/><rect x="5" y="3" width="1" height="1" fill="#fff"/><rect x="5" y="5" width="1" height="1" fill="#fff"/><rect x="5" y="7" width="1" height="1" fill="#fff"/><rect x="5" y="9" width="1" height="1" fill="#fff"/><rect x="5" y="11" width="1" height="1" fill="#fff"/><rect x="5" y="13" width="1" height="1" fill="#fff"/><rect x="7" y="1" width="1" height="1" fill="#fff"/><rect x="7" y="3" width="1" height="1" fill="#fff"/><rect x="7" y="5" width="1" height="1" fill="#fff"/><rect x="7" y="7" width="1" height="1" fill="#fff"/><rect x="7" y="9" width="1" height="1" fill="#fff"/><rect x="7" y="11" width="1" height="1" fill="#fff"/><rect x="7" y="13" width="1" height="1" fill="#fff"/><rect x="9" y="1" width="1" height="1" fill="#fff"/><rect x="9" y="3" width="1" height="1" fill="#fff"/><rect x="9" y="5" width="1" height="1" fill="#fff"/><rect x="9" y="7" width="1" height="1" fill="#fff"/><rect x="9" y="9" width="1" height="1" fill="#fff"/><rect x="9" y="11" width="1" height="1" fill="#fff"/><rect x="9" y="13" width="1" height="1" fill="#fff"/><rect x="11" y="1" width="1" height="1" fill="#fff"/><rect x="11" y="3" width="1" height="1" fill="#fff"/><rect x="11" y="5" width="1" height="1" fill="#fff"/><rect x="11" y="7" width="1" height="1" fill="#fff"/><rect x="11" y="9" width="1" height="1" fill="#fff"/><rect x="11" y="11" width="1" height="1" fill="#fff"/><rect x="11" y="13" width="1" height="1" fill="#fff"/><rect x="13" y="1" width="1" height="1" fill="#fff"/><rect x="13" y="3" width="1" height="1" fill="#fff"/><rect x="13" y="5" width="1" height="1" fill="#fff"/><rect x="13" y="7" width="1" height="1" fill="#fff"/><rect x="13" y="9" width="1" height="1" fill="#fff"/><rect x="13" y="11" width="1" height="1" fill="#fff"/><rect x="13" y="13" width="1" height="1" fill="#fff"/></svg><div style="position:absolute;left:917px;top:66px;width:1px;height:18px;background:#808080"></div><div style="position:absolute;left:918px;top:66px;width:1px;height:18px;background:#fff"></div><div style="position:absolute;left:921px;top:64px;width:23px;height:22px;box-shadow:inset 1px 1px #808080, inset -1px -1px #fff;background:repeating-conic-gradient(#fff 0 25%, #D4D0C8 0 50%) 0 0/2px 2px"></div><svg style="position:absolute;left:926px;top:68px" width="16" height="16"><path d="M1,14 l2,-5 l7,-8 l3,3 l-8,7 z" fill="#FFFF60" stroke="#000"/><path d="M9,2 l3,3" stroke="#800000" stroke-width="2"/><path d="M10,10 l5,5 M15,10 l-5,5 M12.5,9 v7 M9,12.5 h7" stroke="#E0E000"/></svg><div style="position:absolute;left:0px;top:87px;width:1024px;height:635px;background:#D4D0C8"></div><div style="position:absolute;left:0px;top:86px;width:124px;height:120px;background:#fff;box-shadow:inset 1px 1px #808080, inset -1px -1px #fff, inset 2px 2px #404040, inset -2px -2px #D4D0C8;"></div><div style="position:absolute;left:14px;top:89px;width:1px;height:104px;background:repeating-linear-gradient(#808080 0 1px, transparent 1px 2px)"></div><div style="position:absolute;left:24px;top:168px;width:52px;height:16px;background:#D4D0C8"></div><div style="position:absolute;left:19px;top:97px;width:5px;height:1px;background:repeating-linear-gradient(90deg,#808080 0 1px, transparent 1px 2px)"></div><div style="position:absolute;left:10px;top:93px;width:9px;height:9px;background:#fff;box-shadow:inset 0 0 0 1px #808080"></div><div style="position:absolute;left:12px;top:97px;width:5px;height:1px;background:#000"></div><div style="position:absolute;left:14px;top:95px;width:1px;height:5px;background:#000"></div><div style="position:absolute;left:25px;top:90px;white-space:nowrap;font:11px 'Liberation Sans', sans-serif;color:#000;line-height:13px">Minifig</div><div style="position:absolute;left:19px;top:113px;width:5px;height:1px;background:repeating-linear-gradient(90deg,#808080 0 1px, transparent 1px 2px)"></div><div style="position:absolute;left:10px;top:109px;width:9px;height:9px;background:#fff;box-shadow:inset 0 0 0 1px #808080"></div><div style="position:absolute;left:12px;top:113px;width:5px;height:1px;background:#000"></div><div style="position:absolute;left:14px;top:111px;width:1px;height:5px;background:#000"></div><div style="position:absolute;left:25px;top:106px;white-space:nowrap;font:11px 'Liberation Sans', sans-serif;color:#000;line-height:13px">Slope</div><div style="position:absolute;left:19px;top:129px;width:5px;height:1px;background:repeating-linear-gradient(90deg,#808080 0 1px, transparent 1px 2px)"></div><div style="position:absolute;left:10px;top:125px;width:9px;height:9px;background:#fff;box-shadow:inset 0 0 0 1px #808080"></div><div style="position:absolute;left:12px;top:129px;width:5px;height:1px;background:#000"></div><div style="position:absolute;left:14px;top:127px;width:1px;height:5px;background:#000"></div><div style="position:absolute;left:25px;top:122px;white-space:nowrap;font:11px 'Liberation Sans', sans-serif;color:#000;line-height:13px">Tile</div><div style="position:absolute;left:19px;top:145px;width:5px;height:1px;background:repeating-linear-gradient(90deg,#808080 0 1px, transparent 1px 2px)"></div><div style="position:absolute;left:10px;top:141px;width:9px;height:9px;background:#fff;box-shadow:inset 0 0 0 1px #808080"></div><div style="position:absolute;left:12px;top:145px;width:5px;height:1px;background:#000"></div><div style="position:absolute;left:14px;top:143px;width:1px;height:5px;background:#000"></div><div style="position:absolute;left:25px;top:138px;white-space:nowrap;font:11px 'Liberation Sans', sans-serif;color:#000;line-height:13px">Other Parts</div><div style="position:absolute;left:19px;top:161px;width:5px;height:1px;background:repeating-linear-gradient(90deg,#808080 0 1px, transparent 1px 2px)"></div><div style="position:absolute;left:10px;top:157px;width:9px;height:9px;background:#fff;box-shadow:inset 0 0 0 1px #808080"></div><div style="position:absolute;left:12px;top:161px;width:5px;height:1px;background:#000"></div><div style="position:absolute;left:14px;top:159px;width:1px;height:5px;background:#000"></div><div style="position:absolute;left:25px;top:154px;white-space:nowrap;font:11px 'Liberation Sans', sans-serif;color:#000;line-height:13px">Models</div><div style="position:absolute;left:19px;top:177px;width:5px;height:1px;background:repeating-linear-gradient(90deg,#808080 0 1px, transparent 1px 2px)"></div><div style="position:absolute;left:10px;top:173px;width:9px;height:9px;background:#fff;box-shadow:inset 0 0 0 1px #808080"></div><div style="position:absolute;left:12px;top:177px;width:5px;height:1px;background:#000"></div><div style="position:absolute;left:14px;top:175px;width:1px;height:5px;background:#000"></div><div style="position:absolute;left:25px;top:170px;white-space:nowrap;font:11px 'Liberation Sans', sans-serif;color:#000;line-height:13px">Favorites</div><div style="position:absolute;left:15px;top:192px;width:9px;height:1px;background:repeating-linear-gradient(90deg,#808080 0 1px, transparent 1px 2px)"></div><div style="position:absolute;left:25px;top:186px;white-space:nowrap;font:11px 'Liberation Sans', sans-serif;color:#000;line-height:13px">Document</div><div style="position:absolute;left:106px;top:88px;width:16px;height:116px;background:repeating-conic-gradient(#fff 0 25%, #D4D0C8 0 50%) 0 0/2px 2px"></div><div style="position:absolute;left:106px;top:88px;width:16px;height:16px;background:#D4D0C8;box-shadow:inset -1px -1px #404040, inset 1px 1px #D4D0C8, inset -2px -2px #808080, inset 2px 2px #fff;"></div><svg style="position:absolute;left:0;top:0" width="1024" height="768"><polygon points="110,98 118,98 114,94" fill="#000"/></svg><div style="position:absolute;left:106px;top:144px;width:16px;height:44px;background:#D4D0C8;box-shadow:inset -1px -1px #404040, inset 1px 1px #D4D0C8, inset -2px -2px #808080, inset 2px 2px #fff;"></div><div style="position:absolute;left:106px;top:188px;width:16px;height:16px;background:#D4D0C8;box-shadow:inset -1px -1px #404040, inset 1px 1px #D4D0C8, inset -2px -2px #808080, inset 2px 2px #fff;"></div><svg style="position:absolute;left:0;top:0" width="1024" height="768"><polygon points="110,194 118,194 114,198" fill="#000"/></svg><div style="position:absolute;left:0px;top:210px;width:124px;height:511px;background:#D4D0C8;box-shadow:inset 1px 1px #808080, inset -1px -1px #fff, inset 2px 2px #404040, inset -2px -2px #D4D0C8;"></div><div style="position:absolute;left:2px;top:212px;width:103px;height:21px;background:#fff;box-shadow:inset 2px 2px #808080, inset -1px -1px #fff, inset -2px -2px #D4D0C8"></div><div style="position:absolute;left:6px;top:216px;white-space:nowrap;font:11px 'Liberation Sans', sans-serif;color:#000;line-height:13px">Favorites</div><div style="position:absolute;left:87px;top:214px;width:16px;height:17px;background:#D4D0C8;box-shadow:inset -1px -1px #404040, inset 1px 1px #D4D0C8, inset -2px -2px #808080, inset 2px 2px #fff;"></div><svg style="position:absolute;left:0;top:0" width="1024" height="768"><polygon points="91,220 99,220 95,224" fill="#000"/></svg><div style="position:absolute;left:2px;top:234px;width:104px;height:467px;background:#fff"></div><div style="position:absolute;left:106px;top:235px;width:16px;height:448px;background:repeating-conic-gradient(#fff 0 25%, #D4D0C8 0 50%) 0 0/2px 2px"></div><div style="position:absolute;left:106px;top:235px;width:16px;height:16px;background:#D4D0C8;box-shadow:inset -1px -1px #404040, inset 1px 1px #D4D0C8, inset -2px -2px #808080, inset 2px 2px #fff;"></div><svg style="position:absolute;left:0;top:0" width="1024" height="768"><polygon points="110,245 118,245 114,241" fill="#000"/></svg><div style="position:absolute;left:106px;top:250px;width:16px;height:28px;background:#D4D0C8;box-shadow:inset -1px -1px #404040, inset 1px 1px #D4D0C8, inset -2px -2px #808080, inset 2px 2px #fff;"></div><div style="position:absolute;left:106px;top:683px;width:16px;height:16px;background:#D4D0C8;box-shadow:inset -1px -1px #404040, inset 1px 1px #D4D0C8, inset -2px -2px #808080, inset 2px 2px #fff;"></div><svg style="position:absolute;left:0;top:0" width="1024" height="768"><polygon points="110,689 118,689 114,693" fill="#000"/></svg><div style="position:absolute;left:2px;top:701px;width:104px;height:18px;background:repeating-conic-gradient(#fff 0 25%, #D4D0C8 0 50%) 0 0/2px 2px"></div><div style="position:absolute;left:2px;top:701px;width:16px;height:18px;background:#D4D0C8;box-shadow:inset -1px -1px #404040, inset 1px 1px #D4D0C8, inset -2px -2px #808080, inset 2px 2px #fff;"></div><svg style="position:absolute;left:0;top:0" width="1024" height="768"><polygon points="12,706 12,714 8,710" fill="#000"/></svg><div style="position:absolute;left:79px;top:701px;width:9px;height:18px;background:#D4D0C8;box-shadow:inset -1px -1px #404040, inset 1px 1px #D4D0C8, inset -2px -2px #808080, inset 2px 2px #fff;"></div><div style="position:absolute;left:89px;top:701px;width:16px;height:18px;background:#D4D0C8;box-shadow:inset -1px -1px #404040, inset 1px 1px #D4D0C8, inset -2px -2px #808080, inset 2px 2px #fff;"></div><svg style="position:absolute;left:0;top:0" width="1024" height="768"><polygon points="95,706 95,714 99,710" fill="#000"/></svg><div style="position:absolute;left:127px;top:86px;width:873px;height:108px;background:#D4D0C8;box-shadow:inset 1px 1px #808080, inset 2px 2px #404040, inset -1px -1px #fff, inset -2px -2px #D4D0C8"></div><div style="position:absolute;left:137px;top:92px;white-space:nowrap;font:11px 'Liberation Sans', sans-serif;color:#000;line-height:13px">Active Model:</div><div style="position:absolute;left:215px;top:88px;width:783px;height:21px;background:#D4D0C8;box-shadow:inset 1px 1px #808080, inset 2px 0 #404040, inset -1px -1px #fff"></div><div style="position:absolute;left:219px;top:92px;white-space:nowrap;font:11px 'Liberation Sans', sans-serif;color:#808080;line-height:13px">Foot-left.ldr</div><div style="position:absolute;left:981px;top:90px;width:16px;height:17px;background:#D4D0C8;box-shadow:inset -1px -1px #404040, inset 1px 1px #D4D0C8, inset -2px -2px #808080, inset 2px 2px #fff;"></div><svg style="position:absolute;left:981px;top:91px" width="16" height="16"><polygon points="5,7 13,7 9,11" fill="#fff"/><polygon points="4,6 12,6 8,10" fill="#808080"/></svg><div style="position:absolute;left:130px;top:114px;width:867px;height:79px;background:#fff;box-shadow:inset 1px 1px #808080, inset 2px 2px #404040, inset -1px -1px #fff, inset -2px -2px #D4D0C8"></div><div style="position:absolute;left:132px;top:116px;width:59px;height:16px;background:#D4D0C8;box-shadow:inset -1px -1px #404040, inset 1px 1px #D4D0C8, inset -2px -2px #808080, inset 2px 2px #fff;"></div><div style="position:absolute;left:138px;top:117px;white-space:nowrap;font:11px 'Liberation Sans', sans-serif;color:#000;line-height:14px">Type</div><div style="position:absolute;left:191px;top:116px;width:59px;height:16px;background:#D4D0C8;box-shadow:inset -1px -1px #404040, inset 1px 1px #D4D0C8, inset -2px -2px #808080, inset 2px 2px #fff;"></div><div style="position:absolute;left:197px;top:117px;white-space:nowrap;font:11px 'Liberation Sans', sans-serif;color:#000;line-height:14px">Color</div><div style="position:absolute;left:250px;top:116px;width:100px;height:16px;background:#D4D0C8;box-shadow:inset -1px -1px #404040, inset 1px 1px #D4D0C8, inset -2px -2px #808080, inset 2px 2px #fff;"></div><div style="position:absolute;left:256px;top:117px;white-space:nowrap;font:11px 'Liberation Sans', sans-serif;color:#000;line-height:14px">Position</div><div style="position:absolute;left:350px;top:116px;width:200px;height:16px;background:#D4D0C8;box-shadow:inset -1px -1px #404040, inset 1px 1px #D4D0C8, inset -2px -2px #808080, inset 2px 2px #fff;"></div><div style="position:absolute;left:356px;top:117px;white-space:nowrap;font:11px 'Liberation Sans', sans-serif;color:#000;line-height:14px">Rotation</div><div style="position:absolute;left:550px;top:116px;width:100px;height:16px;background:#D4D0C8;box-shadow:inset -1px -1px #404040, inset 1px 1px #D4D0C8, inset -2px -2px #808080, inset 2px 2px #fff;"></div><div style="position:absolute;left:556px;top:117px;white-space:nowrap;font:11px 'Liberation Sans', sans-serif;color:#000;line-height:14px">Part no./Model ...</div><div style="position:absolute;left:650px;top:116px;width:300px;height:16px;background:#D4D0C8;box-shadow:inset -1px -1px #404040, inset 1px 1px #D4D0C8, inset -2px -2px #808080, inset 2px 2px #fff;"></div><div style="position:absolute;left:656px;top:117px;white-space:nowrap;font:11px 'Liberation Sans', sans-serif;color:#000;line-height:14px">Part name/Description</div><div style="position:absolute;left:950px;top:116px;width:30px;height:16px;background:#D4D0C8;box-shadow:inset -1px -1px #404040, inset 1px 1px #D4D0C8, inset -2px -2px #808080, inset 2px 2px #fff;"></div><div style="position:absolute;left:956px;top:117px;white-space:nowrap;font:11px 'Liberation Sans', sans-serif;color:#000;line-height:14px"></div><svg style="position:absolute;left:136px;top:133px" width="10" height="10"><ellipse cx="4" cy="3.7" rx="3.2" ry="2.3" stroke="#000" stroke-width="1.1" fill="none"/><path d="M5.5,6 l-0.5,1.5 l-2,0.8" stroke="#000" stroke-width="1.1" fill="none"/></svg><div style="position:absolute;left:146px;top:133px;white-space:nowrap;font:11px 'Liberation Sans', sans-serif;color:#000;line-height:13px">COMM...</div><div style="position:absolute;left:199px;top:133px;white-space:nowrap;font:11px 'Liberation Sans', sans-serif;color:#000;line-height:13px">--</div><div style="position:absolute;left:257px;top:133px;white-space:nowrap;font:11px 'Liberation Sans', sans-serif;color:#000;line-height:13px">------</div><div style="position:absolute;left:357px;top:133px;white-space:nowrap;font:11px 'Liberation Sans', sans-serif;color:#000;line-height:13px">------</div><div style="position:absolute;left:557px;top:133px;white-space:nowrap;font:11px 'Liberation Sans', sans-serif;color:#000;line-height:13px">------</div><div style="position:absolute;left:657px;top:133px;white-space:nowrap;font:11px 'Liberation Sans', sans-serif;color:#000;line-height:13px;letter-spacing:-0.3px">Foot-left</div><svg style="position:absolute;left:136px;top:147px" width="10" height="10"><ellipse cx="4" cy="3.7" rx="3.2" ry="2.3" stroke="#000" stroke-width="1.1" fill="none"/><path d="M5.5,6 l-0.5,1.5 l-2,0.8" stroke="#000" stroke-width="1.1" fill="none"/></svg><div style="position:absolute;left:146px;top:147px;white-space:nowrap;font:11px 'Liberation Sans', sans-serif;color:#000;line-height:13px">COMM...</div><div style="position:absolute;left:199px;top:147px;white-space:nowrap;font:11px 'Liberation Sans', sans-serif;color:#000;line-height:13px">--</div><div style="position:absolute;left:257px;top:147px;white-space:nowrap;font:11px 'Liberation Sans', sans-serif;color:#000;line-height:13px">------</div><div style="position:absolute;left:357px;top:147px;white-space:nowrap;font:11px 'Liberation Sans', sans-serif;color:#000;line-height:13px">------</div><div style="position:absolute;left:557px;top:147px;white-space:nowrap;font:11px 'Liberation Sans', sans-serif;color:#000;line-height:13px">------</div><div style="position:absolute;left:657px;top:147px;white-space:nowrap;font:11px 'Liberation Sans', sans-serif;color:#000;line-height:13px;letter-spacing:-0.3px">Name: Foot-left.ldr</div><svg style="position:absolute;left:136px;top:161px" width="10" height="10"><ellipse cx="4" cy="3.7" rx="3.2" ry="2.3" stroke="#000" stroke-width="1.1" fill="none"/><path d="M5.5,6 l-0.5,1.5 l-2,0.8" stroke="#000" stroke-width="1.1" fill="none"/></svg><div style="position:absolute;left:146px;top:161px;white-space:nowrap;font:11px 'Liberation Sans', sans-serif;color:#000;line-height:13px">COMM...</div><div style="position:absolute;left:199px;top:161px;white-space:nowrap;font:11px 'Liberation Sans', sans-serif;color:#000;line-height:13px">--</div><div style="position:absolute;left:257px;top:161px;white-space:nowrap;font:11px 'Liberation Sans', sans-serif;color:#000;line-height:13px">------</div><div style="position:absolute;left:357px;top:161px;white-space:nowrap;font:11px 'Liberation Sans', sans-serif;color:#000;line-height:13px">------</div><div style="position:absolute;left:557px;top:161px;white-space:nowrap;font:11px 'Liberation Sans', sans-serif;color:#000;line-height:13px">------</div><div style="position:absolute;left:657px;top:161px;white-space:nowrap;font:11px 'Liberation Sans', sans-serif;color:#000;line-height:13px;letter-spacing:-0.3px">Author: Pascalimero</div><svg style="position:absolute;left:136px;top:175px" width="10" height="10"><ellipse cx="4" cy="3.7" rx="3.2" ry="2.3" stroke="#000" stroke-width="1.1" fill="none"/><path d="M5.5,6 l-0.5,1.5 l-2,0.8" stroke="#000" stroke-width="1.1" fill="none"/></svg><div style="position:absolute;left:146px;top:175px;white-space:nowrap;font:11px 'Liberation Sans', sans-serif;color:#000;line-height:13px">COMM...</div><div style="position:absolute;left:199px;top:175px;white-space:nowrap;font:11px 'Liberation Sans', sans-serif;color:#000;line-height:13px">--</div><div style="position:absolute;left:257px;top:175px;white-space:nowrap;font:11px 'Liberation Sans', sans-serif;color:#000;line-height:13px">------</div><div style="position:absolute;left:357px;top:175px;white-space:nowrap;font:11px 'Liberation Sans', sans-serif;color:#000;line-height:13px">------</div><div style="position:absolute;left:557px;top:175px;white-space:nowrap;font:11px 'Liberation Sans', sans-serif;color:#000;line-height:13px">------</div><div style="position:absolute;left:657px;top:175px;white-space:nowrap;font:11px 'Liberation Sans', sans-serif;color:#000;line-height:13px;letter-spacing:-0.3px">Unofficial Model</div><div style="position:absolute;left:980px;top:116px;width:16px;height:75px;background:repeating-conic-gradient(#fff 0 25%, #D4D0C8 0 50%) 0 0/2px 2px"></div><div style="position:absolute;left:980px;top:116px;width:16px;height:16px;background:#D4D0C8;box-shadow:inset -1px -1px #404040, inset 1px 1px #D4D0C8, inset -2px -2px #808080, inset 2px 2px #fff;"></div><svg style="position:absolute;left:0;top:0" width="1024" height="768"><polygon points="984,126 992,126 988,122" fill="#000"/></svg><div style="position:absolute;left:980px;top:132px;width:16px;height:14px;background:#D4D0C8;box-shadow:inset -1px -1px #404040, inset 1px 1px #D4D0C8, inset -2px -2px #808080, inset 2px 2px #fff;"></div><div style="position:absolute;left:980px;top:175px;width:16px;height:16px;background:#D4D0C8;box-shadow:inset -1px -1px #404040, inset 1px 1px #D4D0C8, inset -2px -2px #808080, inset 2px 2px #fff;"></div><svg style="position:absolute;left:0;top:0" width="1024" height="768"><polygon points="984,181 992,181 988,185" fill="#000"/></svg><div style="position:absolute;left:128px;top:198px;width:461px;height:279px;background:#fff;box-shadow:inset 1px 1px #000, inset -1px -1px #fff, inset -2px -2px #D4D0C8"></div><div style="position:absolute;left:593px;top:198px;width:408px;height:279px;background:#fff;box-shadow:inset 1px 1px #000, inset -1px -1px #fff, inset -2px -2px #D4D0C8"></div><div style="position:absolute;left:128px;top:481px;width:461px;height:241px;background:#fff;box-shadow:inset 1px 1px #000, inset -1px -1px #fff, inset -2px -2px #D4D0C8"></div><div style="position:absolute;left:593px;top:481px;width:408px;height:241px;background:#fff;box-shadow:inset 1px 1px #000, inset 2px 2px #f00, inset -1px -1px #fff, inset -2px -2px #D4D0C8, inset -3px -3px #f00"></div><svg style="position:absolute;left:0;top:0" width="1024" height="768" shape-rendering="crispEdges"><rect x="328.5" y="206.5" width="37" height="13" fill="#1E1E1E" stroke="#3A3A3A"/><rect x="390.5" y="206.5" width="37" height="13" fill="#1E1E1E" stroke="#3A3A3A"/><rect x="316.5" y="219.5" width="125" height="75" fill="#1E1E1E" stroke="#3A3A3A"/><line x1="316.5" y1="225.5" x2="442.5" y2="225.5" stroke="#5E5E5E"/><rect x="266.5" y="281.5" width="37" height="13" fill="#1E1E1E" stroke="#3A3A3A"/><rect x="453.5" y="281.5" width="37" height="13" fill="#1E1E1E" stroke="#3A3A3A"/><rect x="254.5" y="294.5" width="249" height="174" fill="#1E1E1E" stroke="#3A3A3A"/><line x1="328.5" y1="219.5" x2="366.5" y2="219.5" stroke="#5E5E5E"/><line x1="390.5" y1="219.5" x2="428.5" y2="219.5" stroke="#5E5E5E"/><line x1="266.5" y1="294.5" x2="304.5" y2="294.5" stroke="#5E5E5E"/><line x1="453.5" y1="294.5" x2="491.5" y2="294.5" stroke="#5E5E5E"/><line x1="254.5" y1="356.5" x2="504.5" y2="356.5" stroke="#5E5E5E"/><line x1="254.5" y1="370.5" x2="504.5" y2="370.5" stroke="#5E5E5E"/><line x1="254.5" y1="443.5" x2="504.5" y2="443.5" stroke="#5E5E5E"/><line x1="316.5" y1="370.5" x2="316.5" y2="443.5" stroke="#5E5E5E"/><rect x="210.5" y="369.5" width="25" height="74" fill="#1E1E1E" stroke="#3A3A3A"/><rect x="222" y="394" width="32" height="25" fill="#1E1E1E"/><line x1="222.5" y1="394.5" x2="253.5" y2="394.5" stroke="#5E5E5E"/><line x1="222.5" y1="418.5" x2="253.5" y2="418.5" stroke="#5E5E5E"/><rect x="714.5" y="206.5" width="37" height="13" fill="#1E1E1E" stroke="#3A3A3A"/><rect x="777.5" y="206.5" width="37" height="13" fill="#1E1E1E" stroke="#3A3A3A"/><rect x="702.5" y="219.5" width="125" height="7" fill="#1E1E1E" stroke="#3A3A3A"/><line x1="714.5" y1="219.5" x2="752.5" y2="219.5" stroke="#5E5E5E"/><line x1="777.5" y1="219.5" x2="815.5" y2="219.5" stroke="#5E5E5E"/><path d="M777.5,226.5 L828.5,226.5 L828.5,294.5 L765.5,294.5 L765.5,281.5 L771.5,281.5 L771.5,246.5 Q772.5,232 777.5,226.5 Z" fill="#1E1E1E" stroke="#3A3A3A"/><line x1="777.5" y1="225.5" x2="828.5" y2="225.5" stroke="#5E5E5E"/><path d="M783.5,230 L783.5,250 A12.5,12.5 0 0 0 808.5,250 L808.5,226" fill="none" stroke="#5E5E5E"/><path d="M783.5,250 A12.5,12.5 0 0 1 808.5,250" fill="none" stroke="#5E5E5E" opacity="0.8"/><rect x="777.5" y="281.5" width="37" height="13" fill="#1E1E1E" stroke="#5E5E5E"/><polygon points="765.5,294.5 828.5,294.5 889.5,356.5 889.5,468.5 765.5,468.5" fill="#1E1E1E" stroke="#3A3A3A"/><line x1="765.5" y1="294.5" x2="828.5" y2="294.5" stroke="#5E5E5E"/><line x1="765.5" y1="369.5" x2="889.5" y2="369.5" stroke="#5E5E5E"/><line x1="765.5" y1="443.5" x2="889.5" y2="443.5" stroke="#5E5E5E"/><line x1="808.5" y1="369.5" x2="808.5" y2="443.5" stroke="#5E5E5E"/><line x1="828.5" y1="369.5" x2="828.5" y2="443.5" stroke="#5E5E5E"/><line x1="871.5" y1="369.5" x2="871.5" y2="443.5" stroke="#5E5E5E"/><rect x="196.5" y="585.5" width="36" height="30" fill="#1E1E1E" stroke="#3A3A3A"/><circle cx="196.5" cy="600.5" r="15.5" fill="#1E1E1E" stroke="#3A3A3A"/><path d="M202,585 L211,593 L211,608 L202,616" fill="none" stroke="#5E5E5E"/><rect x="196.5" y="659.5" width="36" height="30" fill="#1E1E1E" stroke="#3A3A3A"/><circle cx="196.5" cy="674.5" r="15.5" fill="#1E1E1E" stroke="#3A3A3A"/><path d="M202,659 L211,667 L211,682 L202,690" fill="none" stroke="#5E5E5E"/><polygon points="308.5,488.5 458.5,488.5 458.5,562.5 533.5,562.5 533.5,713.5 233.5,713.5 233.5,562.5 308.5,562.5" fill="#1E1E1E" stroke="#3A3A3A"/><rect x="234" y="638" width="299" height="75" fill="#1A1A1A"/><line x1="233.5" y1="637.5" x2="533.5" y2="637.5" stroke="#5E5E5E"/><line x1="308.5" y1="562.5" x2="308.5" y2="637.5" stroke="#5E5E5E"/><line x1="458.5" y1="562.5" x2="458.5" y2="637.5" stroke="#5E5E5E"/><line x1="233.5" y1="562.5" x2="533.5" y2="562.5" stroke="#3A3A3A"/><polygon points="367.5,525.0 360.90990257669733,509.09009742330267 345.0,502.5 329.09009742330267,509.09009742330267 322.5,525.0 329.09009742330267,540.9099025766973 345.0,547.5 360.90990257669733,540.9099025766973" fill="none" stroke="#5E5E5E"/><polygon points="359.488887394336,521.1177143234622 352.5,512.0096189432335 341.11771432346217,510.511112605664 332.0096189432334,517.5 330.511112605664,528.8822856765378 337.5,537.9903810567665 348.8822856765378,539.4888873943361 357.9903810567666,532.5" fill="none" stroke="#5E5E5E"/><polygon points="442.5,525.0 435.90990257669733,509.09009742330267 420.0,502.5 404.09009742330267,509.09009742330267 397.5,525.0 404.09009742330267,540.9099025766973 420.0,547.5 435.90990257669733,540.9099025766973" fill="none" stroke="#5E5E5E"/><polygon points="434.488887394336,521.1177143234622 427.5,512.0096189432335 416.11771432346217,510.511112605664 407.0096189432334,517.5 405.511112605664,528.8822856765378 412.5,537.9903810567665 423.8822856765378,539.4888873943361 432.9903810567666,532.5" fill="none" stroke="#5E5E5E"/><polygon points="367.5,600.0 360.90990257669733,584.0900974233027 345.0,577.5 329.09009742330267,584.0900974233027 322.5,600.0 329.09009742330267,615.9099025766973 345.0,622.5 360.90990257669733,615.9099025766973" fill="none" stroke="#5E5E5E"/><polygon points="359.488887394336,596.1177143234622 352.5,587.0096189432335 341.11771432346217,585.5111126056639 332.0096189432334,592.5 330.511112605664,603.8822856765378 337.5,612.9903810567665 348.8822856765378,614.4888873943361 357.9903810567666,607.5" fill="none" stroke="#5E5E5E"/><polygon points="442.5,600.0 435.90990257669733,584.0900974233027 420.0,577.5 404.09009742330267,584.0900974233027 397.5,600.0 404.09009742330267,615.9099025766973 420.0,622.5 435.90990257669733,615.9099025766973" fill="none" stroke="#5E5E5E"/><polygon points="434.488887394336,596.1177143234622 427.5,587.0096189432335 416.11771432346217,585.5111126056639 407.0096189432334,592.5 405.511112605664,603.8822856765378 412.5,612.9903810567665 423.8822856765378,614.4888873943361 432.9903810567666,607.5" fill="none" stroke="#5E5E5E"/><polygon points="292.5,600.0 285.90990257669733,584.0900974233027 270.0,577.5 254.0900974233027,584.0900974233027 247.5,600.0 254.09009742330267,615.9099025766973 270.0,622.5 285.90990257669733,615.9099025766973" fill="none" stroke="#5E5E5E"/><polygon points="517.5,600.0 510.90990257669733,584.0900974233027 495.0,577.5 479.09009742330267,584.0900974233027 472.5,600.0 479.09009742330267,615.9099025766973 495.0,622.5 510.90990257669733,615.9099025766973" fill="none" stroke="#5E5E5E"/></svg><svg style="position:absolute;left:0;top:0" width="1024" height="768"><polygon points="794.5,487.5 851.5,532.5 850.5,536.5 866.5,554.5 885.5,607.5 870.5,660.5 764.5,718.5 747.5,705.5 746.5,707.5 738.5,706.5 733.5,702.5 734.5,694.5 717.0,684.5 712.5,685.0 704.0,680.5 704.0,675.5 715.0,642.5 721.5,627.5 733.5,588.5 756.5,575.5 759.9,574.2 759.9,569.5 765.1,564.9 767.7,556.5 770.3,551.3 776.5,548.2 741.5,519.5 740.5,516.5" fill="#1E1E1E" stroke="#3A3A3A"/><polyline points="741.5,519.5 798.5,563.5 850.5,536.5" fill="none" stroke="#5E5E5E"/><polyline points="740.5,516.5 798.5,560.5 851.5,532.5" fill="none" stroke="#5E5E5E"/><polyline points="798.5,563.5 787.5,597.5" fill="none" stroke="#5E5E5E"/><polyline points="840.5,567.5 850.5,540.5" fill="none" stroke="#5E5E5E"/><polyline points="732.5,588.5 763.5,610.5 866.5,554.5" fill="none" stroke="#5E5E5E"/><polyline points="763.5,610.5 780.5,668.5 885.5,607.5" fill="none" stroke="#5E5E5E"/><polyline points="781.5,663.5 883.5,609.5" fill="none" stroke="#5E5E5E"/><polyline points="780.5,668.5 768.5,705.5 870.5,650.5" fill="none" stroke="#5E5E5E"/><polyline points="805.5,656.5 795.5,691.5" fill="none" stroke="#5E5E5E"/><polyline points="757.5,574.5 787.5,597.5" fill="none" stroke="#5E5E5E"/><polyline points="722.5,624.5 780.5,668.5" fill="none" stroke="#5E5E5E"/><polyline points="731.5,645.5 738.5,652.5 734.5,664.5 726.5,668.5 723.5,671.5" fill="none" stroke="#5E5E5E"/><polyline points="725.5,659.5 738.5,652.5" fill="none" stroke="#5E5E5E"/><polyline points="723.5,671.5 720.5,682.5" fill="none" stroke="#5E5E5E"/><polyline points="723.5,671.5 738.5,681.5 734.5,694.5" fill="none" stroke="#5E5E5E"/><polyline points="759.5,669.5 767.5,676.5 763.5,688.5 754.5,692.5 751.5,694.5" fill="none" stroke="#5E5E5E"/><polyline points="755.5,681.5 767.5,676.5" fill="none" stroke="#5E5E5E"/><polyline points="751.5,694.5 750.5,705.5" fill="none" stroke="#5E5E5E"/><polyline points="751.5,694.5 768.5,705.5" fill="none" stroke="#5E5E5E"/><polyline points="750.5,649.5 744.5,663.5 739.5,683.5" fill="none" stroke="#5E5E5E"/><ellipse cx="768" cy="515" rx="12" ry="9" fill="none" stroke="#5E5E5E" transform="rotate(-20 768 515)"/><ellipse cx="769" cy="514" rx="8" ry="5" fill="none" stroke="#5E5E5E" transform="rotate(-20 768 515)"/><ellipse cx="794" cy="502" rx="12" ry="9" fill="none" stroke="#5E5E5E" transform="rotate(-20 794 502)"/><ellipse cx="795" cy="501" rx="8" ry="5" fill="none" stroke="#5E5E5E" transform="rotate(-20 794 502)"/><ellipse cx="825" cy="524" rx="12" ry="9" fill="none" stroke="#5E5E5E" transform="rotate(-20 825 524)"/><ellipse cx="826" cy="523" rx="8" ry="5" fill="none" stroke="#5E5E5E" transform="rotate(-20 825 524)"/><ellipse cx="797" cy="538" rx="12" ry="9" fill="none" stroke="#5E5E5E" transform="rotate(-20 797 538)"/><ellipse cx="798" cy="537" rx="8" ry="5" fill="none" stroke="#5E5E5E" transform="rotate(-20 797 538)"/><ellipse cx="760" cy="586" rx="11" ry="7" fill="none" stroke="#5E5E5E" transform="rotate(20 760 586)"/><path d="M749,589 q2,8 11,9 q9,0 11,-6" fill="none" stroke="#5E5E5E"/><ellipse cx="780" cy="565" rx="6" ry="8.6" fill="none" stroke="#5E5E5E" transform="rotate(-20 780 565)"/><polyline points="777.5,548.5 775.5,556.5 773.5,565.5" fill="none" stroke="#5E5E5E"/><ellipse cx="723" cy="643" rx="7.8" ry="5.5" fill="none" stroke="#5E5E5E" transform="rotate(15 723 643)"/><ellipse cx="752" cy="666" rx="7.5" ry="5.5" fill="none" stroke="#5E5E5E" transform="rotate(15 752 666)"/></svg><svg style="position:absolute;left:0;top:0" width="1024" height="768" shape-rendering="crispEdges"><rect x="576" y="446" width="2" height="20" fill="#000"/><polygon points="576,435 578,435 580,442 580,446 573,446 573,442" fill="#000"/><rect x="558" y="464" width="20" height="2" fill="#000"/><polygon points="547,464 547,466 551,468 558,468 558,462 551,462" fill="#000"/><rect x="603" y="446" width="2" height="20" fill="#000"/><polygon points="603,435 605,435 607,442 607,446 600,446 600,442" fill="#000"/><rect x="603" y="464" width="20" height="2" fill="#000"/><polygon points="635,464 635,466 630,468 623,468 623,462 630,462" fill="#000"/><rect x="558" y="491" width="20" height="2" fill="#000"/><polygon points="547,491 547,493 551,495 558,495 558,489 551,489" fill="#000"/><rect x="576" y="491" width="2" height="20" fill="#000"/><polygon points="576,522 578,522 580,515 580,511 573,511 573,515" fill="#000"/></svg><div style="position:absolute;left:568px;top:427px;width:4px;height:1px;background:#000"></div><div style="font:13px 'Liberation Sans', sans-serif;line-height:15px;position:absolute;white-space:nowrap;color:#000;left:575px;top:420px">Y</div><div style="position:absolute;left:527px;top:465px;width:4px;height:1px;background:#000"></div><div style="font:13px 'Liberation Sans', sans-serif;line-height:15px;position:absolute;white-space:nowrap;color:#000;left:533px;top:458px">X</div><div style="position:absolute;left:597px;top:427px;width:4px;height:1px;background:#000"></div><div style="font:13px 'Liberation Sans', sans-serif;line-height:15px;position:absolute;white-space:nowrap;color:#000;left:603px;top:420px">Y</div><div style="position:absolute;left:640px;top:465px;width:4px;height:1px;background:#000"></div><div style="font:13px 'Liberation Sans', sans-serif;line-height:15px;position:absolute;white-space:nowrap;color:#000;left:646px;top:458px">Z</div><div style="position:absolute;left:527px;top:491px;width:4px;height:1px;background:#000"></div><div style="font:13px 'Liberation Sans', sans-serif;line-height:15px;position:absolute;white-space:nowrap;color:#000;left:533px;top:484px">X</div><div style="position:absolute;left:568px;top:530px;width:4px;height:1px;background:#000"></div><div style="font:13px 'Liberation Sans', sans-serif;line-height:15px;position:absolute;white-space:nowrap;color:#000;left:575px;top:523px">Z</div><div style="position:absolute;left:132px;top:202px;white-space:nowrap;font:12.8px 'Liberation Sans', sans-serif;color:#000;letter-spacing:1.1px;line-height:15px">Front</div><div style="position:absolute;left:970px;top:202px;white-space:nowrap;font:12.8px 'Liberation Sans', sans-serif;color:#000;letter-spacing:1.1px;line-height:15px">Left</div><div style="position:absolute;left:132px;top:700px;white-space:nowrap;font:12.8px 'Liberation Sans', sans-serif;color:#000;letter-spacing:1.1px;line-height:15px">Top</div><div style="position:absolute;left:979px;top:700px;white-space:nowrap;font:12.8px 'Liberation Sans', sans-serif;color:#000;letter-spacing:1.1px;line-height:15px">3D</div><div style="position:absolute;left:1004px;top:103px;width:16px;height:16px;background:#D4D0C8;box-shadow:inset -1px -1px #808080, inset 1px 1px #fff;"></div><div style="position:absolute;left:1006px;top:105px;width:11px;height:11px;background:#1F1F1F"></div><div style="position:absolute;left:1004px;top:123px;width:16px;height:16px;background:#D4D0C8;box-shadow:inset -1px -1px #808080, inset 1px 1px #fff;"></div><div style="position:absolute;left:1006px;top:125px;width:11px;height:11px;background:#0033B2"></div><div style="position:absolute;left:1004px;top:143px;width:16px;height:16px;background:#D4D0C8;box-shadow:inset -1px -1px #808080, inset 1px 1px #fff;"></div><div style="position:absolute;left:1006px;top:145px;width:11px;height:11px;background:#00851C"></div><div style="position:absolute;left:1004px;top:163px;width:16px;height:16px;background:#D4D0C8;box-shadow:inset -1px -1px #808080, inset 1px 1px #fff;"></div><div style="position:absolute;left:1006px;top:165px;width:11px;height:11px;background:#00929C"></div><div style="position:absolute;left:1004px;top:183px;width:16px;height:16px;background:#D4D0C8;box-shadow:inset -1px -1px #808080, inset 1px 1px #fff;"></div><div style="position:absolute;left:1006px;top:185px;width:11px;height:11px;background:#C8001A"></div><div style="position:absolute;left:1004px;top:203px;width:16px;height:16px;background:#D4D0C8;box-shadow:inset -1px -1px #808080, inset 1px 1px #fff;"></div><div style="position:absolute;left:1006px;top:205px;width:11px;height:11px;background:#E06A9C"></div><div style="position:absolute;left:1004px;top:223px;width:16px;height:16px;background:#D4D0C8;box-shadow:inset -1px -1px #808080, inset 1px 1px #fff;"></div><div style="position:absolute;left:1006px;top:225px;width:11px;height:11px;background:#5C2000"></div><div style="position:absolute;left:1004px;top:243px;width:16px;height:16px;background:#D4D0C8;box-shadow:inset -1px -1px #808080, inset 1px 1px #fff;"></div><div style="position:absolute;left:1006px;top:245px;width:11px;height:11px;background:#9C9C9C"></div><div style="position:absolute;left:1004px;top:263px;width:16px;height:16px;background:#D4D0C8;box-shadow:inset -1px -1px #808080, inset 1px 1px #fff;"></div><div style="position:absolute;left:1006px;top:265px;width:11px;height:11px;background:#6B6656"></div><div style="position:absolute;left:1004px;top:283px;width:16px;height:16px;background:#D4D0C8;box-shadow:inset -1px -1px #808080, inset 1px 1px #fff;"></div><div style="position:absolute;left:1006px;top:285px;width:11px;height:11px;background:#6BA5E0"></div><div style="position:absolute;left:1004px;top:303px;width:16px;height:16px;background:#D4D0C8;box-shadow:inset -1px -1px #808080, inset 1px 1px #fff;"></div><div style="position:absolute;left:1006px;top:305px;width:11px;height:11px;background:#6EF08A"></div><div style="position:absolute;left:1004px;top:323px;width:16px;height:16px;background:#D4D0C8;box-shadow:inset -1px -1px #808080, inset 1px 1px #fff;"></div><div style="position:absolute;left:1006px;top:325px;width:11px;height:11px;background:#33999A"></div><div style="position:absolute;left:1004px;top:343px;width:16px;height:16px;background:#D4D0C8;box-shadow:inset -1px -1px #808080, inset 1px 1px #fff;"></div><div style="position:absolute;left:1006px;top:345px;width:11px;height:11px;background:#FF7B6B"></div><div style="position:absolute;left:1004px;top:363px;width:16px;height:16px;background:#D4D0C8;box-shadow:inset -1px -1px #808080, inset 1px 1px #fff;"></div><div style="position:absolute;left:1006px;top:365px;width:11px;height:11px;background:#F9A4C9"></div><div style="position:absolute;left:1004px;top:383px;width:16px;height:16px;background:#D4D0C8;box-shadow:inset -1px -1px #808080, inset 1px 1px #fff;"></div><div style="position:absolute;left:1006px;top:385px;width:11px;height:11px;background:#FFD500"></div><div style="position:absolute;left:1004px;top:403px;width:16px;height:16px;background:#D4D0C8;box-shadow:inset -1px -1px #808080, inset 1px 1px #fff;"></div><div style="position:absolute;left:1006px;top:405px;width:11px;height:11px;background:#FFFFFF"></div><div style="position:absolute;left:1004px;top:423px;width:16px;height:16px;background:#D4D0C8;box-shadow:inset -1px -1px #808080, inset 1px 1px #fff;"></div><div style="position:absolute;left:1006px;top:424px;white-space:nowrap;font:bold 13px 'Liberation Sans', sans-serif;color:#808080;line-height:14px">M</div><div style="position:absolute;left:1001px;top:444px;width:23px;height:1px;background:#808080"></div><div style="position:absolute;left:1001px;top:445px;width:23px;height:5px;background:#fff"></div><div style="position:absolute;left:1001px;top:450px;width:23px;height:1px;background:#808080"></div><div style="position:absolute;left:1001px;top:451px;width:23px;height:1px;background:#fff"></div><div style="position:absolute;left:1003px;top:477px;width:21px;height:1px;background:#808080"></div><div style="position:absolute;left:1003px;top:478px;width:21px;height:1px;background:#fff"></div><div style="position:absolute;left:1001px;top:679px;width:23px;height:1px;background:#808080"></div><div style="position:absolute;left:1001px;top:680px;width:23px;height:1px;background:#fff"></div><div style="position:absolute;left:1001px;top:720px;width:23px;height:1px;background:#808080"></div><div style="position:absolute;left:1001px;top:87px;width:23px;height:1px;background:#808080"></div><div style="position:absolute;left:1003px;top:89px;width:21px;height:1px;background:#fff"></div><div style="position:absolute;left:1003px;top:92px;width:21px;height:1px;background:#808080"></div><div style="position:absolute;left:0px;top:721px;width:1024px;height:21px;background:#D4D0C8"></div><div style="position:absolute;left:2px;top:726px;white-space:nowrap;font:11.8px 'Liberation Sans', sans-serif;color:#000;line-height:14px">x = 0.0, y = 0.0, z = 0.0</div><div style="position:absolute;left:917px;top:724px;width:26px;height:16px;background:#D4D0C8;box-shadow:inset 1px 1px #808080, inset -1px -1px #fff;"></div><div style="position:absolute;left:945px;top:724px;width:28px;height:16px;background:#D4D0C8;box-shadow:inset 1px 1px #808080, inset -1px -1px #fff;"></div><div style="position:absolute;left:947px;top:726px;white-space:nowrap;font:11px 'Liberation Sans', sans-serif;color:#000;line-height:13px;letter-spacing:-0.8px">NUM</div><div style="position:absolute;left:975px;top:724px;width:31px;height:16px;background:#D4D0C8;box-shadow:inset 1px 1px #808080, inset -1px -1px #fff;"></div><svg style="position:absolute;left:1008px;top:726px" width="16" height="15"><path d="M14 2 L3 13 M14 6 L7 13 M14 10 L11 13" stroke="#808080" stroke-width="1"/><path d="M15 2 L4 13 M15 6 L8 13 M15 10 L12 13" stroke="#fff" stroke-width="1"/></svg><div style="position:absolute;left:0px;top:741px;width:1024px;height:27px;background:#D4D0C8"></div><div style="position:absolute;left:0px;top:741px;width:1024px;height:1px;background:#fff"></div><div style="position:absolute;left:2px;top:744px;width:53px;height:22px;background:#D4D0C8;box-shadow:inset -1px -1px #404040, inset 1px 1px #D4D0C8, inset -2px -2px #808080, inset 2px 2px #fff;"></div><div style="position:absolute;left:22px;top:748px;white-space:nowrap;font:bold 12px 'Liberation Sans', sans-serif;color:#000;line-height:14px">Start</div><div style="position:absolute;left:61px;top:746px;width:1px;height:18px;background:#808080"></div><div style="position:absolute;left:62px;top:746px;width:1px;height:18px;background:#fff"></div><div style="position:absolute;left:68px;top:744px;width:160px;height:22px;background:#D4D0C8;box-shadow:inset -1px -1px #404040, inset 1px 1px #D4D0C8, inset -2px -2px #808080, inset 2px 2px #fff;"></div><div style="position:absolute;left:91px;top:749px;white-space:nowrap;font:11px 'Liberation Sans', sans-serif;color:#000;line-height:14px;letter-spacing:-0.4px">MOC Spaceship</div><div style="position:absolute;left:231px;top:744px;width:159px;height:22px;box-shadow:inset 1px 1px #404040, inset 2px 2px #808080, inset -1px -1px #fff;background:repeating-conic-gradient(#fff 0 25%, #D4D0C8 0 50%) 0 0/2px 2px"></div><div style="position:absolute;left:256px;top:749px;white-space:nowrap;font:bold 11px 'Liberation Sans', sans-serif;color:#000;line-height:14px;letter-spacing:0.3px">Foot-left.ldr - MLCad</div><div style="position:absolute;left:394px;top:744px;width:160px;height:22px;background:#D4D0C8;box-shadow:inset -1px -1px #404040, inset 1px 1px #D4D0C8, inset -2px -2px #808080, inset 2px 2px #fff;"></div><div style="position:absolute;left:417px;top:749px;white-space:nowrap;font:11px 'Liberation Sans', sans-serif;color:#000;line-height:14px;letter-spacing:-0.3px">Brickshelf Gallery - Mozill...</div><div style="position:absolute;left:856px;top:744px;width:165px;height:22px;background:#D4D0C8;box-shadow:inset 1px 1px #808080, inset -1px -1px #fff;"></div><div style="position:absolute;left:986px;top:749px;white-space:nowrap;font:12px 'Liberation Sans', sans-serif;color:#000;line-height:14px">21:52</div><svg style="position:absolute;left:0;top:0" width="1024" height="768"><polygon points="17,282 40,271 85,272.6 85,286 81,287 85,290 85,302 62,311 17,294" fill="#6c6c6c" stroke="#3a3a3a" stroke-width="1" stroke-linejoin="round"/><polygon points="17,282 40,271 62,266 85,272.6 85,286 81,287 85,290 62,298" fill="#7b7b7b" stroke="#3a3a3a" stroke-width="1" stroke-linejoin="round"/><polygon points="62,298 85,290 85,302 62,311" fill="#646464" stroke="#3a3a3a" stroke-width="1" stroke-linejoin="round"/><polyline points="62,298 62,311" fill="none" stroke="#3a3a3a"/><path d="M51.5,267.5 v5 a9.5,4 0 0 0 19.0,0 v-5" fill="#6c6c6c" stroke="#3a3a3a"/><ellipse cx="61" cy="267.5" rx="9.5" ry="4" fill="#7b7b7b" stroke="#3a3a3a"/><path d="M29.200000000000003,276 v5 a9.5,4 0 0 0 19.0,0 v-5" fill="#6c6c6c" stroke="#3a3a3a"/><ellipse cx="38.7" cy="276" rx="9.5" ry="4" fill="#7b7b7b" stroke="#3a3a3a"/><path d="M51.5,284.5 v5 a9.5,4 0 0 0 19.0,0 v-5" fill="#6c6c6c" stroke="#3a3a3a"/><ellipse cx="61" cy="284.5" rx="9.5" ry="4" fill="#7b7b7b" stroke="#3a3a3a"/><polygon points="17,347 42,338 85,355 85,367 75,371 75,378 68,382 57,382 50,377 50,371 17,360" fill="#6c6c6c" stroke="#3a3a3a" stroke-width="1" stroke-linejoin="round"/><polygon points="17,347 42,338 85,355 62,364" fill="#7b7b7b" stroke="#3a3a3a" stroke-width="1" stroke-linejoin="round"/><polygon points="62,364 85,355 85,367 75,371" fill="#646464" stroke="#3a3a3a" stroke-width="1" stroke-linejoin="round"/><path d="M50,371 v6 a12,5 0 0 0 25,0 v-6" fill="#6c6c6c" stroke="#3a3a3a"/><ellipse cx="62.5" cy="371" rx="12.5" ry="5" fill="#7b7b7b" stroke="#3a3a3a"/><ellipse cx="62.5" cy="370.5" rx="7" ry="3" fill="none" stroke="#3a3a3a"/><polyline points="17,347 52,360" fill="none" stroke="#3a3a3a"/><path d="M29.0,342 v5 a9.5,4 0 0 0 19.0,0 v-5" fill="#6c6c6c" stroke="#3a3a3a"/><ellipse cx="38.5" cy="342" rx="9.5" ry="4" fill="#7b7b7b" stroke="#3a3a3a"/><path d="M51.5,348.5 v5 a9.5,4 0 0 0 19.0,0 v-5" fill="#6c6c6c" stroke="#3a3a3a"/><ellipse cx="61" cy="348.5" rx="9.5" ry="4" fill="#7b7b7b" stroke="#3a3a3a"/><path d="M16,423 v5 a9.5,4 0 0 0 19,0 v-5" fill="#6c6c6c" stroke="#3a3a3a"/><ellipse cx="25.5" cy="423" rx="9.5" ry="4" fill="#7b7b7b" stroke="#3a3a3a"/><polygon points="38,426 60,417 85,429 85,440 65.5,448.5 38,437" fill="#6c6c6c" stroke="#3a3a3a" stroke-width="1" stroke-linejoin="round"/><polygon points="38,426 60,417 85,429 66,437" fill="#7b7b7b" stroke="#3a3a3a" stroke-width="1" stroke-linejoin="round"/><polygon points="66,437 85,429 85,440 65.5,448.5" fill="#646464" stroke="#3a3a3a" stroke-width="1" stroke-linejoin="round"/><path d="M36.0,417 v5 a9.5,4 0 0 0 19.0,0 v-5" fill="#6c6c6c" stroke="#3a3a3a"/><ellipse cx="45.5" cy="417" rx="9.5" ry="4" fill="#7b7b7b" stroke="#3a3a3a"/><path d="M56.0,424 v5 a9.5,4 0 0 0 19.0,0 v-5" fill="#6c6c6c" stroke="#3a3a3a"/><ellipse cx="65.5" cy="424" rx="9.5" ry="4" fill="#7b7b7b" stroke="#3a3a3a"/><polygon points="16.6,492.7 53,478 84.6,492.3 84.6,520 67,527.4 32.7,513.4 16.6,498.5" fill="#6c6c6c" stroke="#3a3a3a" stroke-width="1" stroke-linejoin="round"/><polygon points="16.6,492.7 53,478 84.6,492.5 50.2,506.3" fill="#7b7b7b" stroke="#3a3a3a" stroke-width="1" stroke-linejoin="round"/><polygon points="50.2,506.3 84.6,492.5 84.6,520 67,527.4 56,516 50.2,511.4" fill="#646464" stroke="#3a3a3a" stroke-width="1" stroke-linejoin="round"/><polyline points="50.2,506.3 50.2,511.4" fill="none" stroke="#3a3a3a"/><polyline points="56,516 67,527.4" fill="none" stroke="#3a3a3a"/><path d="M25.200000000000003,488.5 v4 a7.5,3 0 0 0 15.0,0 v-4" fill="#6c6c6c" stroke="#3a3a3a"/><ellipse cx="32.7" cy="488.5" rx="7.5" ry="3" fill="#7b7b7b" stroke="#3a3a3a"/><path d="M42.7,482 v4 a7.5,3 0 0 0 15.0,0 v-4" fill="#6c6c6c" stroke="#3a3a3a"/><ellipse cx="50.2" cy="482" rx="7.5" ry="3" fill="#7b7b7b" stroke="#3a3a3a"/><path d="M42.7,494 v4 a7.5,3 0 0 0 15.0,0 v-4" fill="#6c6c6c" stroke="#3a3a3a"/><ellipse cx="50.2" cy="494" rx="7.5" ry="3" fill="#7b7b7b" stroke="#3a3a3a"/><path d="M60.3,488.5 v4 a7.5,3 0 0 0 15.0,0 v-4" fill="#6c6c6c" stroke="#3a3a3a"/><ellipse cx="67.8" cy="488.5" rx="7.5" ry="3" fill="#7b7b7b" stroke="#3a3a3a"/><polygon points="16.6,564.5 29.5,559 84.6,579.3 71.3,584.4" fill="#7b7b7b" stroke="#3a3a3a" stroke-width="1" stroke-linejoin="round"/><polygon points="16.6,564.5 71.3,584.4 71.3,592.6 16.6,570.7" fill="#6c6c6c" stroke="#3a3a3a" stroke-width="1" stroke-linejoin="round"/><polygon points="71.3,584.4 84.6,579.3 84.6,586.3 71.3,592.6" fill="#646464" stroke="#3a3a3a" stroke-width="1" stroke-linejoin="round"/><polygon points="18.3,651.4 30.3,617.5 35,613.3 77.7,629 82.4,632 82.4,673.2 61,681.6 18.3,665.4" fill="#7b7b7b" stroke="#3a3a3a" stroke-width="1" stroke-linejoin="round"/><polygon points="18.3,651.4 61,669.6 61,681.6 18.3,665.4" fill="#6c6c6c" stroke="#3a3a3a" stroke-width="1" stroke-linejoin="round"/><polygon points="61,669.6 72.5,631 82.4,632 82.4,673.2 61,681.6" fill="#646464" stroke="#3a3a3a" stroke-width="1" stroke-linejoin="round"/><polygon points="44.9,630 66.8,638.3 61.6,653.4 44.9,647.2" fill="#fff" stroke="#3a3a3a" stroke-width="1" stroke-linejoin="round"/><polygon points="22.5,654 35,620.6 44.9,630 44.9,647.2 61.6,653.4 59,666.5" fill="#6c6c6c" stroke="#3a3a3a" stroke-width="1" stroke-linejoin="round"/><polyline points="61,669.6 61,681.6" fill="none" stroke="#3a3a3a"/></svg><svg style="position:absolute;left:0px;top:0px" width="20" height="18"><text x="9" y="5.2" font-family="Liberation Sans" font-weight="bold" font-size="6" letter-spacing="0.3" fill="#0000FF">ML</text><polygon points="2,7.4 7.4,5 17.8,9.2 12.5,12" fill="#F00000" stroke="#A00000" stroke-width="0.6"/><polygon points="2,7.4 12.5,12 12.5,16.8 2,11.7" fill="#E80000" stroke="#A00000" stroke-width="0.6"/><polygon points="12.5,12 17.8,9.2 17.8,13.5 12.5,16.8" fill="#D00000" stroke="#A00000" stroke-width="0.6"/><circle cx="7.4" cy="6.4" r="0.9" fill="#B0B0B0"/><circle cx="9.4" cy="7.4" r="0.9" fill="#B0B0B0"/><circle cx="11.5" cy="8.4" r="0.9" fill="#B0B0B0"/><circle cx="13.5" cy="9.4" r="0.9" fill="#B0B0B0"/></svg><svg style="position:absolute;left:1005px;top:455px" width="16" height="16"><path d="M1,2.5 h10 M1,0 v5 M11,0 v5" stroke="#000"/><path d="M1.5,8.5 h1 v-2 h2 v2 h4 v-2 h2 v2 h1 v5 h-10 z" fill="#FFFF60" stroke="#000"/><path d="M14,5 v9 M12,7 l2,-2 l2,2 M12,12 l2,2 l2,-2" stroke="#000" fill="none"/></svg><svg style="position:absolute;left:1005px;top:484px" width="16" height="16"><path d="M5,9 v-5 q2,-3 4,0 v5 z" fill="#fff" stroke="#000"/><path d="M2,12 l3,-3 h8 l3,3 z" fill="#008000" stroke="#000"/><rect x="0" y="12" width="16" height="3" fill="#000080"/></svg><svg style="position:absolute;left:1005px;top:506px" width="16" height="16"><path d="M10,2 a7,7 0 1 0 0,12" stroke="#E0D000" stroke-width="2" fill="none"/><circle cx="9" cy="8" r="3" fill="none" stroke="#888"/><path d="M12,1 v14" stroke="#C00000"/><path d="M4,8 h12" stroke="#888"/></svg><svg style="position:absolute;left:1005px;top:528px" width="16" height="16"><path d="M3,0 v5 M0,3 l3,3 l3,-3" stroke="#000080" stroke-width="2" fill="none"/><rect x="3.5" y="5.5" width="12" height="9" fill="#fff" stroke="#000"/><path d="M1,15 v-5 l4,-2 l4,3 l6,-4 v8 z" fill="#FFFF60" stroke="#000"/></svg><svg style="position:absolute;left:1005px;top:550px" width="16" height="16"><rect x="1" y="1" width="14" height="13" rx="3" fill="#A00000"/><rect x="3" y="5" width="10" height="9" rx="2" fill="#FFFF40" stroke="#000"/><circle cx="6" cy="8.5" r="1" fill="#000"/><circle cx="10" cy="8.5" r="1" fill="#000"/><path d="M6,11 q2,2 4,0" stroke="#000" fill="none"/><rect x="1" y="15" width="14" height="1" fill="#000080"/></svg><svg style="position:absolute;left:1005px;top:572px" width="16" height="16"><path d="M3,3 q5,-3 10,0 M3,6 q5,-3 10,0 M3,9 q5,-3 10,0 M3,12 q5,-3 10,0" stroke="#444" stroke-width="1.5" fill="none"/></svg><svg style="position:absolute;left:1005px;top:594px" width="16" height="16"><path d="M2,12 l10,-9 q3,-1 3,2 l-9,9 q-3,1 -4,-2z" fill="#ccc" stroke="#000080" stroke-width="1.5"/><circle cx="6" cy="10" r="2" fill="none" stroke="#666"/></svg><svg style="position:absolute;left:1005px;top:616px" width="16" height="16"><path d="M3,2 h5 v6 h-3 v5 h3 v2 h-5 z" fill="#FFFF40" stroke="#000"/><circle cx="6" cy="4" r="1.5" fill="#000"/><rect x="9" y="8" width="5" height="4" fill="#FFFF40" stroke="#000"/><path d="M12,1 l3,0 v3 M1,13 v2 h2" stroke="#000" fill="none"/></svg><svg style="position:absolute;left:1005px;top:638px" width="16" height="16"><path d="M8,1 v8 M5,6 l3,3 l3,-3" stroke="#808000" stroke-width="2" fill="none"/><path d="M3,6 a6,6 0 1 0 10,0" stroke="#000080" stroke-width="2.2" fill="none"/><path d="M1,4 l3,-3 l2,3z" fill="#C00000"/></svg><svg style="position:absolute;left:1005px;top:660px" width="16" height="16"><path d="M1,15 v-4 h6 l2,-2 h5 v6 z" fill="#FFFF60" stroke="#000"/><path d="M7,10 l7,-8" stroke="#000" stroke-width="2"/><path d="M12,3 l2,-2" stroke="#C00000" stroke-width="2.5"/></svg><svg style="position:absolute;left:5px;top:747px" width="16" height="16"><path d="M1,3 q3,-2 6,0 l-1,5 q-3,-2 -6,0z" fill="#F04000"/><path d="M8,3 q3,2 6,0 l-1,5 q-3,2 -6,0z" fill="#00A000"/><path d="M0,9 q3,-2 6,0 l-1,5 q-3,-2 -6,0z" fill="#0060F0"/><path d="M7,9 q3,2 6,0 l-1,5 q-3,2 -6,0z" fill="#F0C000"/></svg><svg style="position:absolute;left:72px;top:747px" width="16" height="16"><path d="M1,3 h5 l1,2 h7 v9 h-13z" fill="#F0D070" stroke="#906020"/><circle cx="8" cy="9" r="3.5" fill="#c0e0ff" stroke="#444"/><path d="M10.5,11.5 l3,3" stroke="#444" stroke-width="2"/></svg><svg style="position:absolute;left:234px;top:745px" width="20" height="20"><text x="9" y="6.2" font-family="Liberation Sans" font-weight="bold" font-size="6" letter-spacing="0.3" fill="#0000FF">ML</text><polygon points="2,8.4 7.4,6 17.8,10.2 12.5,13" fill="#F00000" stroke="#A00000" stroke-width="0.6"/><polygon points="2,8.4 12.5,13 12.5,17.8 2,12.7" fill="#E80000" stroke="#A00000" stroke-width="0.6"/><polygon points="12.5,13 17.8,10.2 17.8,14.5 12.5,17.8" fill="#D00000" stroke="#A00000" stroke-width="0.6"/><circle cx="7.4" cy="7.4" r="0.9" fill="#B0B0B0"/><circle cx="9.4" cy="8.4" r="0.9" fill="#B0B0B0"/><circle cx="11.5" cy="9.4" r="0.9" fill="#B0B0B0"/><circle cx="13.5" cy="10.4" r="0.9" fill="#B0B0B0"/></svg><svg style="position:absolute;left:398px;top:747px" width="16" height="16"><circle cx="8" cy="8" r="7.5" fill="#F08000"/><circle cx="9" cy="7" r="5" fill="#3060C0"/><path d="M1,8 q2,-6 6,-6 q-3,3 0,6 q3,3 7,0 q-2,7 -8,7 q-5,-1 -5,-7z" fill="#F07000"/></svg><svg style="position:absolute;left:860px;top:750px" width="10" height="8"><path d="M4,1 l-3,3 l3,3 M8,1 l-3,3 l3,3" stroke="#000" stroke-width="1.6" fill="none"/></svg><svg style="position:absolute;left:874px;top:747px" width="16" height="16"><rect x="0" y="0" width="15" height="12" fill="#808080" stroke="#000" stroke-width="1"/><rect x="2" y="14" width="4" height="2" fill="#000"/><rect x="9" y="14" width="4" height="2" fill="#000"/></svg><svg style="position:absolute;left:892px;top:747px" width="16" height="16"><rect x="4" y="8" width="10" height="6" fill="#888" transform="rotate(-20 9 11)"/><path d="M1,6 l4,-5 l3,2 l-2,1 q2,3 5,3 l-3,3 q-4,-1 -5,-5z" fill="#20C020"/></svg><svg style="position:absolute;left:909px;top:747px" width="16" height="16"><rect x="1" y="2" width="14" height="13" fill="#1040A0"/><rect x="3" y="1" width="12" height="12" fill="#3080E0" stroke="#003080"/><circle cx="9" cy="7" r="2" fill="#fff" opacity="0.8"/></svg><svg style="position:absolute;left:927px;top:747px" width="16" height="16"><rect x="1" y="4" width="9" height="7" fill="#203060"/><ellipse cx="5" cy="13" rx="5" ry="2" fill="#c0d0f0"/><path d="M11,3 q2,3 0,6 M13,1 q3,5 0,10" stroke="#444" fill="none"/></svg><svg style="position:absolute;left:945px;top:747px" width="16" height="16"><rect x="6" y="1" width="9" height="7" fill="#203060"/><rect x="1" y="6" width="9" height="7" fill="#203060"/><ellipse cx="5" cy="14" rx="5" ry="2" fill="#c0d0f0"/><path d="M9,9 l6,6 M15,9 l-6,6" stroke="#E00000" stroke-width="2"/></svg><svg style="position:absolute;left:966px;top:747px" width="16" height="16"><rect x="1" y="1" width="10" height="15" rx="2" fill="#2040E0" stroke="#000"/><rect x="2" y="2" width="8" height="6" fill="#fff"/><path d="M6,3 v4 M4,5 h4 M4,12 h4" stroke="#E00000"/></svg>
</body></html>
